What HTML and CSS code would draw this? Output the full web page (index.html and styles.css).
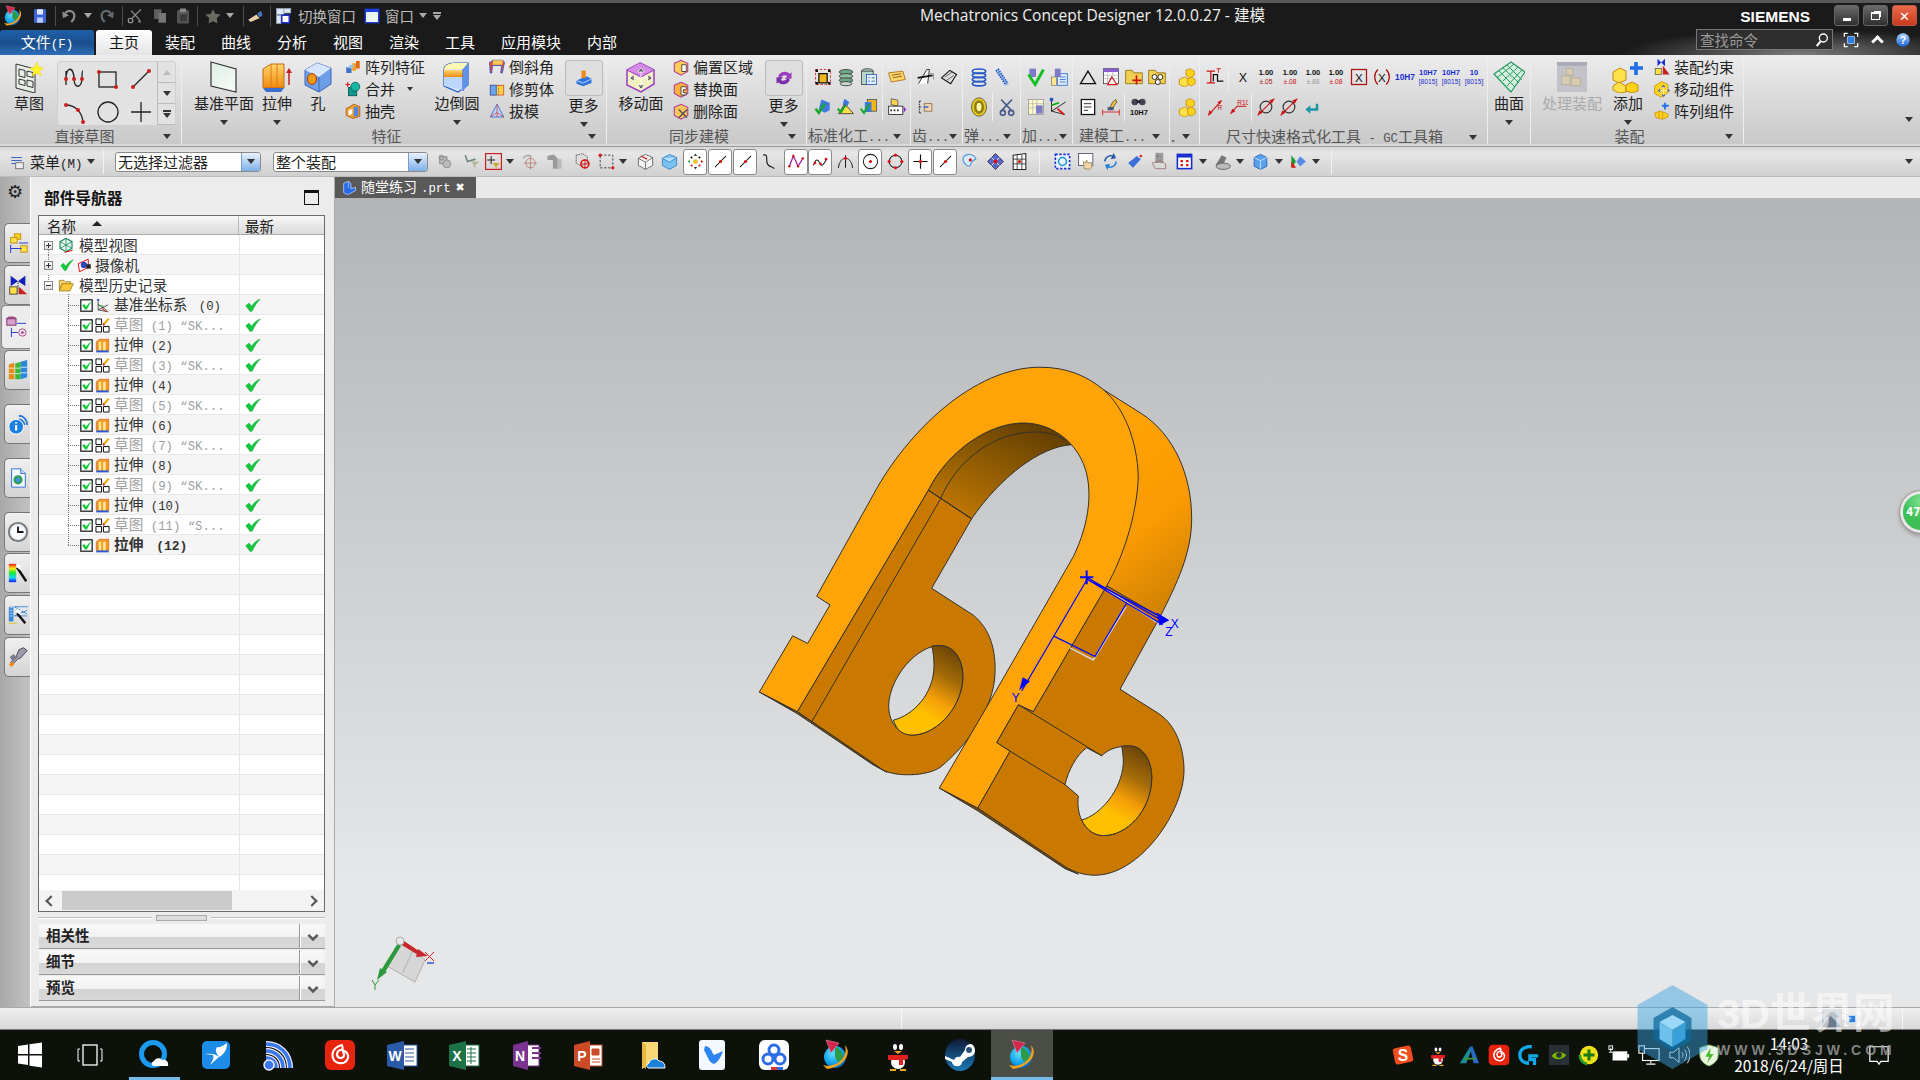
FILE: index.html
```html
<!DOCTYPE html>
<html lang="zh">
<head>
<meta charset="utf-8">
<title>Mechatronics Concept Designer 12.0.0.27 - 建模</title>
<link rel="stylesheet" href="styles.css">
</head>
<body>
<svg class="defs" xmlns="http://www.w3.org/2000/svg">
<defs>
<linearGradient id="gOr" x1="0" y1="0" x2="0" y2="1"><stop offset="0" stop-color="#ffd76a"/><stop offset="1" stop-color="#f08a10"/></linearGradient>
<linearGradient id="gBl" x1="0" y1="0" x2="0" y2="1"><stop offset="0" stop-color="#a9d4ff"/><stop offset="1" stop-color="#1b62d8"/></linearGradient>
<linearGradient id="gYe" x1="0" y1="0" x2="1" y2="1"><stop offset="0" stop-color="#fff3a8"/><stop offset="1" stop-color="#f0b818"/></linearGradient>
<linearGradient id="gPl" x1="0" y1="0" x2="1" y2="1"><stop offset="0" stop-color="#dcefe2"/><stop offset="1" stop-color="#f7fbf8"/></linearGradient>
<radialGradient id="gGlobe" cx=".4" cy=".35" r=".75"><stop offset="0" stop-color="#5fe0ff"/><stop offset=".6" stop-color="#10a0e8"/><stop offset="1" stop-color="#0a4fa8"/></radialGradient>
<linearGradient id="gSide" x1=".3" y1="0" x2=".6" y2="1"><stop offset="0" stop-color="#ffa408"/><stop offset=".6" stop-color="#fb9a02"/><stop offset="1" stop-color="#cf8204"/></linearGradient>
<linearGradient id="gIn" x1=".85" y1="0" x2=".15" y2="1"><stop offset="0" stop-color="#5f3c02"/><stop offset=".45" stop-color="#8a5802"/><stop offset="1" stop-color="#c67a04"/></linearGradient>
<linearGradient id="gHole" x1=".75" y1="0" x2=".3" y2="1"><stop offset="0" stop-color="#6b4506"/><stop offset=".3" stop-color="#a56c08"/><stop offset=".55" stop-color="#f49d08"/><stop offset=".75" stop-color="#ffc000"/><stop offset="1" stop-color="#ffc000"/></linearGradient>
<linearGradient id="gSp" x1="0" y1="0" x2="0" y2="1"><stop offset="0" stop-color="#f01818"/><stop offset=".25" stop-color="#f8e818"/><stop offset=".5" stop-color="#18e838"/><stop offset=".75" stop-color="#18d8f0"/><stop offset="1" stop-color="#1818f0"/></linearGradient>
<linearGradient id="gSt" x1="0" y1="0" x2="0" y2="1"><stop offset="0" stop-color="#0e1b36"/><stop offset="1" stop-color="#1a7ab8"/></linearGradient>

<symbol id="nx" viewBox="0 0 32 32"><circle cx="15" cy="18" r="11" fill="url(#gGlobe)"/><path d="M15 8c5 1 9 6 8 12l-5 3-3-5z" fill="#2d9a4a"/><path d="M6 1l13 3-8 10z" fill="#d4264e" stroke="#f5a0b0" stroke-width=".5"/><path d="M25 6c8 9-2 22-18 24l-4-4 5 1c12-1 20-10 17-21z" fill="#f4a21d"/></symbol>
<symbol id="save" viewBox="0 0 24 24"><rect x="4" y="3" width="16" height="18" fill="#3c63d8"/><rect x="8" y="3" width="8" height="7" fill="#e6ecff"/><rect x="8" y="14" width="8" height="7" fill="#b9c7f5"/></symbol>
<symbol id="undo" viewBox="0 0 24 24"><path d="M7 8c4-5 13-3 12 5 0 3-2 5-4 7" fill="none" stroke="#8d8d8d" stroke-width="3"/><path d="M3 6l1 9 8-4z" fill="#8d8d8d"/></symbol>
<symbol id="redo" viewBox="0 0 24 24"><path d="M17 8c-4-5-13-3-12 5 0 3 2 5 4 7" fill="none" stroke="#606c72" stroke-width="3"/><path d="M21 6l-1 9-8-4z" fill="#606c72"/></symbol>
<symbol id="cut" viewBox="0 0 24 24"><path d="M8 15L20 3M7 5l11 12" stroke="#888" stroke-width="1.600"/><circle cx="6" cy="18" r="3" fill="none" stroke="#999" stroke-width="1.600"/><circle cx="18" cy="19" r="2" fill="#777"/></symbol>
<symbol id="copy" viewBox="0 0 24 24"><rect x="4" y="3" width="10" height="13" fill="#5f5f5f"/><rect x="10" y="8" width="10" height="13" fill="#767676"/></symbol>
<symbol id="paste" viewBox="0 0 24 24"><rect x="4" y="4" width="16" height="18" rx="2" fill="#555"/><rect x="8" y="2" width="8" height="5" fill="#888"/><rect x="8" y="10" width="9" height="9" fill="#3a3a3a"/></symbol>
<symbol id="star" viewBox="0 0 24 24"><path d="M12 3l3 6 7 1-5 5 1 7-6-3-6 3 1-7-5-5 7-1z" fill="#6a6a60"/></symbol>
<symbol id="brush" viewBox="0 0 24 24"><path d="M3 17l11-7 4 5-12 5z" fill="#e8cfa8"/><path d="M15 9l5-4 2 6-4 3z" fill="#4a78c8"/></symbol>
<symbol id="sw" viewBox="0 0 24 24"><rect x="2" y="2" width="10" height="8" fill="#dfe6f2" stroke="#8fa0b8"/><rect x="12" y="2" width="9" height="6" fill="#dfe6f2" stroke="#8fa0b8"/><rect x="2" y="11" width="6" height="11" fill="#dfe6f2" stroke="#8fa0b8"/><rect x="9" y="11" width="10" height="10" fill="#fff" stroke="#1a2fd0" stroke-width="2"/></symbol>
<symbol id="wn" viewBox="0 0 24 24"><rect x="2" y="2" width="20" height="20" fill="url(#gPl)" stroke="#1b3ee0" stroke-width="2"/><rect x="3" y="3" width="18" height="3" fill="#1b3ee0"/></symbol>
<symbol id="search" viewBox="0 0 24 24"><circle cx="14" cy="9" r="6" fill="none" stroke="#fff" stroke-width="2"/><path d="M10 14l-6 7" stroke="#fff" stroke-width="3"/></symbol>
<symbol id="focus" viewBox="0 0 24 24"><path d="M2 7V2h5M17 2h5v5M22 17v5h-5M7 22H2v-5" fill="none" stroke="#fff" stroke-width="2"/><rect x="7" y="7" width="10" height="10" fill="#2b7fe0" stroke="#cfe3ff"/></symbol>
<symbol id="help" viewBox="0 0 24 24"><circle cx="12" cy="12" r="10" fill="url(#gBl)"/><text x="12" y="18" text-anchor="middle" font-size="16" font-weight="700" font-family="Liberation Sans" fill="#fff">?</text></symbol>

<symbol id="sk" viewBox="0 0 32 32"><path d="M3 3l19 5v24L3 27z" fill="#e8efe6" stroke="#333"/><path d="M6 8l6 1.500v7l-6-1.500zM14 10l6 1.500v5l-6-1.500zM6 18l6 1.500v5l-6-1.500zM14 19l6 1.500v6l-6-1.500z" fill="none" stroke="#333"/><path d="M24 1l1.500 5 5 1-4 3 2 5-5-3-4 3 1-5-4-3 5-.5z" fill="#fff22e" stroke="#eed200" stroke-width=".5"/></symbol>
<symbol id="ga1" viewBox="0 0 24 24"><path d="M3 4v14M3 12c0-14 8-12 8 0 0 10 8 10 8-2 0-4 0-6 1-6" fill="none" stroke="#222" stroke-width="1.300"/><circle cx="3" cy="12" r="2" fill="#d01e1e"/><circle cx="11" cy="12" r="2" fill="#d01e1e"/><circle cx="19" cy="12" r="2" fill="#d01e1e"/></symbol>
<symbol id="ga2" viewBox="0 0 24 24"><rect x="3" y="5" width="17" height="15" fill="none" stroke="#222" stroke-width="1.300"/><circle cx="3" cy="5" r="2" fill="#d01e1e"/><circle cx="20" cy="20" r="2" fill="#d01e1e"/></symbol>
<symbol id="ga3" viewBox="0 0 24 24"><path d="M4 20L20 4" stroke="#222" stroke-width="1.300"/><circle cx="4" cy="20" r="2" fill="#d01e1e"/><circle cx="20" cy="4" r="2" fill="#d01e1e"/></symbol>
<symbol id="ga4" viewBox="0 0 24 24"><path d="M3 5c8 0 16 6 17 17" fill="none" stroke="#222" stroke-width="1.300"/><circle cx="3" cy="5" r="2" fill="#d01e1e"/><circle cx="15" cy="10" r="2" fill="#d01e1e"/><circle cx="20" cy="22" r="2" fill="#d01e1e"/></symbol>
<symbol id="ga5" viewBox="0 0 24 24"><circle cx="12" cy="12" r="10" fill="none" stroke="#222" stroke-width="1.300"/></symbol>
<symbol id="ga6" viewBox="0 0 24 24"><path d="M12 2v20M2 12h20" stroke="#222" stroke-width="1.300"/></symbol>

<symbol id="plane" viewBox="0 0 32 32"><path d="M3 1l25 7v23L3 25z" fill="url(#gPl)" stroke="#333" stroke-width="1.200"/></symbol>
<symbol id="ext" viewBox="0 0 32 32"><path d="M2 8l8-5 13 0v24H2z" fill="url(#gOr)" stroke="#c06a10"/><path d="M10 3v24M16 3v24" stroke="#e07818"/><path d="M2 27h21l-3 4H5z" fill="#3a6fd0"/><path d="M28 24V9" stroke="#c81e1e" stroke-width="1.500"/><path d="M25 12l3-5 3 5z" fill="#c81e1e"/></symbol>
<symbol id="hole" viewBox="0 0 32 32"><path d="M3 9l12-7 14 5v16l-12 8-14-7z" fill="#6d9fe8" stroke="#3a64b8"/><path d="M3 9l14 7 12-9-14-5z" fill="#d6e6ff"/><path d="M17 16v15" stroke="#3a64b8"/><ellipse cx="10" cy="18" rx="4.500" ry="5.500" fill="#f29a10" stroke="#c03010"/></symbol>
<symbol id="arr" viewBox="0 0 24 24"><rect x="3" y="12" width="7" height="8" fill="#3d6fc8"/><rect x="11" y="7" width="5" height="10" fill="#f0a020"/><rect x="16" y="4" width="5" height="10" fill="#e86a10"/><path d="M3 13l6-4 6 1-6 4z" fill="#9cc0ef"/></symbol>
<symbol id="unite" viewBox="0 0 24 24"><rect x="6" y="10" width="11" height="11" fill="#0b9a8c" stroke="#044"/><circle cx="15" cy="9" r="6" fill="#18b5a5" stroke="#055"/><path d="M2 6h6M5 3v6" stroke="#d11" stroke-width="1.600"/></symbol>
<symbol id="shell" viewBox="0 0 24 24"><path d="M3 9l10-6 8 3v13l-9 3-9-4z" fill="#f2a02a" stroke="#a64a0a"/><path d="M13 6l6 1v11l-6 2z" fill="#4f86df"/><path d="M6 11l5-2v7l-5 2z" fill="#fff"/></symbol>
<symbol id="blend" viewBox="0 0 32 32"><path d="M3 9c0-5 5-7 11-7h13v22l-10 7-14-6z" fill="#d7e8ff" stroke="#2458c8" stroke-width="1.200"/><path d="M3 9c0-5 5-7 11-7h13l-5 6H10z" fill="#fff6b0"/><path d="M3 9h19v7H3z" fill="url(#gOr)"/><path d="M3 16h19v13l-19-4z" fill="#bcd7fb"/><path d="M22 8v22" stroke="#2458c8"/><path d="M22 8l5-6v22l-5 6z" fill="#5d92e8"/></symbol>
<symbol id="chamfer" viewBox="0 0 24 24"><path d="M2 6l5-3h13l2 3-3 14h-2l1-10H6l-1 10H3z" fill="#e84a3a" stroke="#1a4fd0"/><path d="M7 3l-1 6h13l1-6z" fill="#f8c850"/></symbol>
<symbol id="trim" viewBox="0 0 24 24"><rect x="3" y="7" width="18" height="13" fill="#ffd04a" stroke="#cf4a10"/><rect x="3" y="7" width="8" height="13" fill="#6fa3ea" stroke="#2458c8"/><path d="M14 7v13" stroke="#d31" stroke-dasharray="2 2"/></symbol>
<symbol id="draft" viewBox="0 0 24 24"><path d="M12 3L3 20h18z" fill="#bcd7fb" stroke="#2458c8"/><path d="M12 3v17M3 20l9-6 9 6" stroke="#d33" fill="none"/></symbol>
<symbol id="more1" viewBox="0 0 24 24"><path d="M3 15l12-5 6 3v5l-10 4-8-3z" fill="#2f74dc"/><path d="M3 15l8 3 10-5" stroke="#cfe3ff" fill="none"/><rect x="9" y="3" width="5" height="9" rx="1" fill="#f08a10"/></symbol>
<symbol id="more2" viewBox="0 0 24 24"><path d="M5 10c2-6 10-7 14-3l2-2v8h-8l3-3c-2-2-6-2-8 2z" fill="#9a3bc0"/><path d="M19 14c-2 6-10 7-14 3l-2 2v-8h8l-3 3c2 2 6 2 8-2z" fill="#7a2fa8"/></symbol>
<symbol id="mvf" viewBox="0 0 32 32"><path d="M15 2l14 7v14l-13 8-14-7V9z" fill="#f3f0c0" stroke="#9a3bc0" stroke-width="1.500"/><path d="M15 2l14 7-13 7-14-7z" fill="#d68be8"/><path d="M2 9l14 7 13-7" fill="none" stroke="#9a3bc0"/><path d="M16 9v17M7 17h18M16 7l-3 4h6zM16 28l-3-4h6zM5 17l4-3v6zM27 17l-4-3v6z" fill="#111" stroke="#fff" stroke-width=".8"/></symbol>
<symbol id="off" viewBox="0 0 24 24"><path d="M3 7l9-4 9 4v11l-9 5-9-5z" fill="#ffcc55" stroke="#b03a9c" stroke-width="1.400"/><path d="M13 9h6v9h-6z" fill="#fff" stroke="#222"/></symbol>
<symbol id="rep" viewBox="0 0 24 24"><path d="M3 7l9-4 9 4v11l-9 5-9-5z" fill="#ffb13a" stroke="#b03a9c" stroke-width="1.400"/><path d="M12 9h7v4h-4v4h4v3h-7z" fill="#fff" stroke="#222"/></symbol>
<symbol id="del" viewBox="0 0 24 24"><path d="M3 7l9-4 9 4v11l-9 5-9-5z" fill="#ffc45a" stroke="#b03a9c" stroke-width="1.400"/><path d="M9 10l11 11M20 10L9 21" stroke="#555" stroke-width="2"/></symbol>
<symbol id="st1" viewBox="0 0 24 24"><rect x="3" y="3" width="18" height="18" fill="none" stroke="#d91f1f" stroke-dasharray="3 2"/><rect x="7" y="8" width="10" height="11" fill="#f0b818" stroke="#111" stroke-width="1.500"/><path d="M3 3h3v3H3zM18 3h3v3h-3zM3 18h3v3H3zM18 18h3v3h-3z" fill="#111"/></symbol>
<symbol id="st2" viewBox="0 0 24 24"><ellipse cx="12" cy="6" rx="8" ry="3" fill="#6fa888" stroke="#333"/><ellipse cx="12" cy="11" rx="8" ry="3" fill="#8fc0a0" stroke="#333"/><ellipse cx="12" cy="16" rx="8" ry="3" fill="#6fa888" stroke="#333"/><ellipse cx="12" cy="20" rx="7" ry="2.500" fill="#c8d8d0" stroke="#333"/></symbol>
<symbol id="st3" viewBox="0 0 24 24"><ellipse cx="10" cy="5" rx="7" ry="3" fill="#9fc4b0" stroke="#444"/><rect x="3" y="5" width="14" height="16" fill="#b8d4c4" stroke="#444"/><rect x="9" y="9" width="12" height="12" fill="#e6f0ff" stroke="#2458c8"/><path d="M11 13h2M15 13h4M11 17h2M15 17h4" stroke="#2458c8"/></symbol>
<symbol id="st4" viewBox="0 0 24 24"><path d="M2 7l17-2 3 10-17 3z" fill="#ffd76a" stroke="#b06a10"/><path d="M6 10l11-2M7 13l11-2" stroke="#7a4a10"/></symbol>
<symbol id="st5" viewBox="0 0 24 24"><path d="M10 3l10 4v9l-6 3-7-4z" fill="#3d7be0"/><path d="M3 14l4 5 7-11" fill="none" stroke="#15a825" stroke-width="3"/></symbol>
<symbol id="st6" viewBox="0 0 24 24"><path d="M10 2l6 4-3 6-5-3z" fill="#3d7be0"/><path d="M3 20l7-11 4 3 7 8z" fill="#ffe04a" stroke="#333"/><path d="M2 14l4 4 5-8" fill="none" stroke="#15a825" stroke-width="2.500"/></symbol>
<symbol id="st7" viewBox="0 0 24 24"><rect x="10" y="3" width="11" height="14" fill="#f0b818" stroke="#555"/><rect x="7" y="6" width="8" height="12" fill="#3d7be0"/><path d="M2 14l4 5 6-10" fill="none" stroke="#15a825" stroke-width="2.500"/></symbol>
<symbol id="st8" viewBox="0 0 24 24"><path d="M5 2l8 2v7l-8-2z" fill="#ffd04a" stroke="#555"/><rect x="2" y="11" width="17" height="10" fill="#fff" stroke="#222"/><path d="M4 16h2M8 16h2M12 16h2" stroke="#222" stroke-width="2"/><path d="M20 11l3 4-3 4z" fill="#8a2fc0"/></symbol>
<symbol id="gr1" viewBox="0 0 24 24"><path d="M3 20L13 3h3l-2 17" fill="#fff" stroke="#111"/><path d="M2 13l18-3" stroke="#111" stroke-width="2"/><path d="M14 8h7v7" stroke="#888" fill="none"/></symbol>
<symbol id="gr2" viewBox="0 0 24 24"><path d="M3 13l10-9 8 5-7 11z" fill="#dcdcdc" stroke="#111" stroke-width="1.300"/><path d="M7 12l9-6M9 16l9-6" stroke="#555"/></symbol>
<symbol id="gr3" viewBox="0 0 24 24"><path d="M4 5v14M4 5h3M4 12h3M4 19h3" stroke="#111" stroke-dasharray="2 1"/><rect x="10" y="8" width="9" height="9" fill="#f6d6b0" stroke="#8a6a40"/><path d="M9 12h6" stroke="#4a6ad0" stroke-width="2"/></symbol>
<symbol id="sp1" viewBox="0 0 24 24"><ellipse cx="12" cy="5" rx="8" ry="2.600" fill="none" stroke="#2458c8" stroke-width="2"/><ellipse cx="12" cy="10" rx="8" ry="2.600" fill="none" stroke="#2458c8" stroke-width="2"/><ellipse cx="12" cy="15" rx="8" ry="2.600" fill="none" stroke="#2458c8" stroke-width="2"/><ellipse cx="12" cy="20" rx="8" ry="2.600" fill="none" stroke="#2458c8" stroke-width="2"/></symbol>
<symbol id="sp2" viewBox="0 0 24 24"><path d="M6 3l12 18" stroke="#2458c8" stroke-width="5" stroke-dasharray="2 1"/><path d="M6 3l12 18" stroke="#7aa8ea" stroke-width="1.500"/></symbol>
<symbol id="sp3" viewBox="0 0 24 24"><ellipse cx="12" cy="12" rx="9" ry="11" fill="#e8c818" stroke="#554"/><ellipse cx="12" cy="12" rx="6" ry="8" fill="#8a7a10"/><ellipse cx="12" cy="12" rx="3" ry="5" fill="#fff4a8"/></symbol>
<symbol id="sp4" viewBox="0 0 24 24"><path d="M5 3l13 14M18 3L5 17" stroke="#4a5a8a" stroke-width="2"/><circle cx="7" cy="19" r="3" fill="none" stroke="#4a5a8a" stroke-width="2"/><circle cx="17" cy="19" r="3" fill="none" stroke="#4a5a8a" stroke-width="2"/></symbol>
<symbol id="ad1" viewBox="0 0 24 24"><rect x="4" y="2" width="8" height="10" fill="#7c7cc8"/><path d="M3 9l8 12L21 3" fill="none" stroke="#15c025" stroke-width="3.500"/></symbol>
<symbol id="ad2" viewBox="0 0 24 24"><rect x="10" y="8" width="12" height="14" fill="#dfeaff" stroke="#2f6fd0"/><path d="M13 12h7M13 15h7M13 18h7" stroke="#2f6fd0"/><rect x="7" y="2" width="7" height="10" fill="#7c7cc8"/><rect x="3" y="12" width="6" height="10" fill="#ffe98a" stroke="#887"/></symbol>
<symbol id="ad3" viewBox="0 0 24 24"><rect x="3" y="3" width="18" height="18" fill="#fff8c8" stroke="#999"/><path d="M3 8h18M3 13h18M8 3v18M13 3v18" stroke="#bbb"/><rect x="12" y="10" width="8" height="10" fill="#7c7cc8"/></symbol>
<symbol id="ad4" viewBox="0 0 24 24"><path d="M3 3v14l16 4M3 17L20 6" fill="none" stroke="#111"/><path d="M3 10l9-3" stroke="#0a0" stroke-width="2"/><path d="M10 14l8 7" stroke="#d11" stroke-width="2"/><rect x="1" y="1" width="4" height="4" fill="#2a50c8"/></symbol>
<symbol id="mt1" viewBox="0 0 24 24"><path d="M12 5L21 20H3z" fill="none" stroke="#111" stroke-width="1.600"/></symbol>
<symbol id="mt2" viewBox="0 0 24 24"><rect x="3" y="2" width="18" height="18" fill="#fff" stroke="#444"/><rect x="3" y="2" width="18" height="4" fill="#8a5fd0"/><path d="M3 10h18M3 14h18M8 6v14M14 6v14" stroke="#bbb"/><path d="M13 12l6 9H8z" fill="#fff" stroke="#d11" stroke-width="1.500"/></symbol>
<symbol id="mt3" viewBox="0 0 24 24"><path d="M2 4h8l2 3h10v13H2z" fill="#f2cf50" stroke="#8a7010"/><path d="M15 10v11M10 16h11" stroke="#c11" stroke-width="2"/></symbol>
<symbol id="mt4" viewBox="0 0 24 24"><path d="M2 4h8l2 3h10v13H2z" fill="#f2cf50" stroke="#8a7010"/><circle cx="9" cy="12" r="3" fill="#fff" stroke="#111"/><circle cx="16" cy="12" r="3" fill="#fff" stroke="#111"/><circle cx="13" cy="18" r="3" fill="#fff" stroke="#111"/></symbol>
<symbol id="mt5" viewBox="0 0 24 24"><rect x="4" y="3" width="16" height="18" fill="#fff" stroke="#111" stroke-width="1.500"/><path d="M7 8h9M7 12h9M7 16h5" stroke="#111"/></symbol>
<symbol id="mt6" viewBox="0 0 24 24"><path d="M2 15v7M22 15v7M2 18h20" stroke="#d11"/><path d="M10 14l4-8 4-3 1 3-3 4-2 5z" fill="#f0c040" stroke="#553"/><rect x="8" y="12" width="7" height="4" fill="#4a5a7a"/></symbol>
<symbol id="mt7" viewBox="0 0 24 24"><circle cx="7" cy="6" r="4" fill="#445"/><circle cx="16" cy="6" r="4" fill="#445"/><rect x="9" y="4" width="5" height="3" fill="#223"/><text x="12" y="21" text-anchor="middle" font-size="9" font-weight="700" font-family="Liberation Sans" fill="#111">10H7</text></symbol>
<symbol id="cube" viewBox="0 0 24 24"><path d="M4 15l6-3 6 3v6l-6 3-6-3z" fill="#ffe24a" stroke="#c68a10"/><path d="M12 4l5-2 5 3v5l-5 3-5-3z" fill="#ffd21a" stroke="#c68a10"/><path d="M14 14l4-2 5 3v5l-5 3-4-3z" fill="#ffd21a" stroke="#c68a10"/></symbol>
<symbol id="d1" viewBox="0 0 24 24"><path d="M2 5h10M2 19h10M7 5v14" stroke="#c11" stroke-width="1.500"/><path d="M10 17V9h5v8h7" fill="none" stroke="#111" stroke-width="1.500"/><path d="M14 2h5M16 2v5" stroke="#c11"/></symbol>
<symbol id="tX" viewBox="0 0 24 24"><text x="12" y="18" text-anchor="middle" font-size="15" font-family="Liberation Sans" fill="#111">X</text></symbol>
<symbol id="num" viewBox="0 0 24 24"><text x="12" y="10" text-anchor="middle" font-size="9" font-weight="700" font-family="Liberation Sans" fill="#111">1.00</text><text x="12" y="20" text-anchor="middle" font-size="8" font-family="Liberation Sans" fill="#a11">±.05</text></symbol>
<symbol id="numr" viewBox="0 0 24 24"><text x="12" y="10" text-anchor="middle" font-size="9" font-weight="700" font-family="Liberation Sans" fill="#111">1.00</text><text x="12" y="20" text-anchor="middle" font-size="8" font-family="Liberation Sans" fill="#c11">±.08</text></symbol>
<symbol id="numg" viewBox="0 0 24 24"><text x="12" y="10" text-anchor="middle" font-size="9" font-weight="700" font-family="Liberation Sans" fill="#111">1.00</text><text x="12" y="20" text-anchor="middle" font-size="8" font-family="Liberation Sans" fill="#999">±.88</text></symbol>
<symbol id="bxX" viewBox="0 0 24 24"><rect x="3" y="3" width="18" height="18" fill="none" stroke="#a11" stroke-width="1.500"/><text x="12" y="18" text-anchor="middle" font-size="14" font-family="Liberation Sans" fill="#111">X</text></symbol>
<symbol id="prX" viewBox="0 0 24 24"><path d="M7 3c-5 5-5 13 0 18M17 3c5 5 5 13 0 18" fill="none" stroke="#a11" stroke-width="1.500"/><text x="12" y="18" text-anchor="middle" font-size="14" font-family="Liberation Sans" fill="#111">X</text></symbol>
<symbol id="h7" viewBox="0 0 24 24"><text x="12" y="16" text-anchor="middle" font-size="10" font-weight="700" font-family="Liberation Sans" fill="#1a2fd0">10H7</text></symbol>
<symbol id="h7b" viewBox="0 0 24 24"><text x="12" y="10" text-anchor="middle" font-size="9" font-weight="700" font-family="Liberation Sans" fill="#1a2fd0">10H7</text><text x="12" y="20" text-anchor="middle" font-size="8" font-family="Liberation Sans" fill="#1a2fd0">[8015]</text></symbol>
<symbol id="h10" viewBox="0 0 24 24"><text x="12" y="10" text-anchor="middle" font-size="9" font-weight="700" font-family="Liberation Sans" fill="#1a2fd0">10</text><text x="12" y="20" text-anchor="middle" font-size="8" font-family="Liberation Sans" fill="#1a2fd0">[8015]</text></symbol>
<symbol id="r1" viewBox="0 0 24 24"><path d="M4 22L20 4" stroke="#c11" stroke-width="1.300"/><path d="M4 22l1-6 4 3zM20 4l-5 2 3 3z" fill="#c11"/><text x="15" y="15" font-size="8" font-family="Liberation Sans" fill="#c11">R</text></symbol>
<symbol id="r2" viewBox="0 0 24 24"><path d="M3 20l8-9h11" fill="none" stroke="#c11" stroke-width="1.300"/><path d="M3 20l2-6 4 3z" fill="#c11"/><text x="11" y="9" font-size="8" font-family="Liberation Sans" fill="#c11">R10</text></symbol>
<symbol id="dia" viewBox="0 0 24 24"><circle cx="12" cy="12" r="7" fill="none" stroke="#333" stroke-width="1.400"/><path d="M2 22L22 2" stroke="#c11" stroke-width="1.300"/><path d="M2 22l2-6 4 3zM22 2l-6 2 3 4z" fill="#c11"/></symbol>
<symbol id="ret" viewBox="0 0 24 24"><path d="M18 8v7H9" fill="none" stroke="#1b96a8" stroke-width="3"/><path d="M10 10l-6 5 6 5z" fill="#1b96a8"/></symbol>
<symbol id="mesh" viewBox="0 0 32 32"><path d="M1 13L18 1l14 10-14 20z" fill="#d5f0dc" stroke="#2a9a68" stroke-width="1.200"/><path d="M5 16L21 3M10 20L25 6M14 25L29 9M6 10l16 16M10 7l16 15M14 4l15 15" stroke="#2a9a68"/></symbol>
<symbol id="proc" viewBox="0 0 32 32"><rect x="0" y="0" width="32" height="32" fill="#c2c2c8"/><rect x="0" y="0" width="32" height="4" fill="#a9a9b8"/><path d="M10 7h7v7h-7zM5 15h9v9H5zM15 17h10v8H15z" fill="#d8cdb2" stroke="#b8ad98"/></symbol>
<symbol id="addc" viewBox="0 0 32 32"><path d="M1 11l7-4 6 3v9l-7 3-6-3z" fill="#ffe24a" stroke="#c68a10"/><path d="M1 25l6-4 7 4v6l-7 1-6-3z" fill="#ffe24a" stroke="#c68a10"/><path d="M14 24l6-3 6 3v6l-6 2-6-2z" fill="#ffd21a" stroke="#c68a10"/><path d="M24 1v13M18 7h13" stroke="#1f6fe8" stroke-width="3.600"/></symbol>
<symbol id="ac" viewBox="0 0 24 24"><path d="M6 1l5 5 5-5v10l-5-5-5 5z" fill="#1a2fd0"/><rect x="3" y="14" width="8" height="8" fill="#ffe24a" stroke="#554"/><path d="M13 22V10l9 12z" fill="#c81e1e"/></symbol>
<symbol id="mc" viewBox="0 0 24 24"><path d="M2 8l9-6 9 4v11l-9 6-9-5z" fill="#ffd21a" stroke="#c68a10"/><path d="M14 8v13M8 14h13M14 6l-3 4h6zM14 23l-3-4h6zM6 14l4-3v6zM23 14l-4-3v6z" fill="#111" stroke="#fff" stroke-width=".7"/></symbol>
<symbol id="pc" viewBox="0 0 24 24"><path d="M16 1v9M12 5h9" stroke="#1f6fe8" stroke-width="2.400"/><path d="M2 15l7-3 6 2 5 2v4l-7 3-9-2z" fill="#ffd21a" stroke="#c68a10"/><path d="M8 13v8M13 14v8" stroke="#c68a10"/></symbol>

<symbol id="tb1" viewBox="0 0 24 24"><rect x="6" y="6" width="9" height="9" fill="#bbb" stroke="#777"/><circle cx="8" cy="7" r="3" fill="none" stroke="#888"/><circle cx="15" cy="15" r="5" fill="#bbb" stroke="#888"/></symbol>
<symbol id="tb2" viewBox="0 0 24 24"><path d="M4 4l3 8 10-3" fill="none" stroke="#6a8a7a" stroke-width="2"/><path d="M12 12h10l-5 5v5z" fill="#b8b89a"/></symbol>
<symbol id="tb3" viewBox="0 0 24 24"><rect x="2" y="2" width="20" height="20" fill="none" stroke="#c81e1e" stroke-width="1.500"/><path d="M9 5v10M4 10h10" stroke="#222" stroke-width="1.300"/><path d="M11 14h9l-4 4v3z" fill="#c8a820"/></symbol>
<symbol id="tb4" viewBox="0 0 24 24"><path d="M3 8c2-4 8-5 10-2" fill="none" stroke="#aaa" stroke-width="2"/><circle cx="12" cy="14" r="6" fill="none" stroke="#b0786a"/><path d="M12 6v16M4 14h16" stroke="#b0786a"/></symbol>
<symbol id="tb5" viewBox="0 0 24 24"><path d="M3 5l8-2 5 5v13h-6V10H3z" fill="#999"/><path d="M16 9h5v12h-5z" fill="#bbb"/></symbol>
<symbol id="tb6" viewBox="0 0 24 24"><path d="M4 4l8-2 6 4v8l-8 4-6-4z" fill="#ddd" stroke="#444" stroke-dasharray="2 1"/><circle cx="15" cy="15" r="5" fill="none" stroke="#d11" stroke-width="2"/><path d="M15 9v12M9 15h12" stroke="#d11"/></symbol>
<symbol id="tb7" viewBox="0 0 24 24"><rect x="4" y="4" width="16" height="16" fill="none" stroke="#222" stroke-dasharray="3 2"/><circle cx="4" cy="4" r="2" fill="#d11"/><circle cx="20" cy="20" r="2" fill="#d11"/></symbol>
<symbol id="tb8" viewBox="0 0 24 24"><path d="M3 8l9-5 9 4v10l-9 5-9-5z" fill="#f4f4f4" stroke="#555"/><path d="M3 8l9 5 9-6M12 13v9" stroke="#555" fill="none"/><path d="M6 5l8 4" stroke="#c22" stroke-width="1.500"/></symbol>
<symbol id="tb9" viewBox="0 0 24 24"><path d="M3 8l9-5 9 4v10l-9 5-9-5z" fill="#7cc0f0" stroke="#2a78c8"/><path d="M3 8l9 5 9-6" fill="#b8e0ff" stroke="#2a78c8"/></symbol>
<symbol id="sn" viewBox="0 0 24 24"><path d="M12 3l9 9-9 9-9-9z" fill="#fff"/><circle cx="12" cy="12" r="3" fill="#f0c020"/><path d="M12 2l-2 3h4zM12 22l-2-3h4z" fill="#333"/><path d="M2 12l3-2v4z" fill="#1a9a2a"/><path d="M22 12l-3-2v4z" fill="#d11"/><circle cx="7" cy="7" r="1.300"/><circle cx="17" cy="7" r="1.300"/><circle cx="7" cy="17" r="1.300" fill="#d11"/><circle cx="17" cy="17" r="1.300" fill="#d11"/></symbol>
<symbol id="ln" viewBox="0 0 24 24"><path d="M5 19L19 5" stroke="#222" stroke-width="1.300"/><circle cx="12" cy="12" r="2" fill="#d11"/></symbol>
<symbol id="kk" viewBox="0 0 24 24"><path d="M4 4c8-2 2 8 6 12 2 3 7 3 8 5" fill="none" stroke="#222" stroke-width="1.500"/></symbol>
<symbol id="pk" viewBox="0 0 24 24"><path d="M3 18l5-13 6 13 6-10" fill="none" stroke="#a020a0" stroke-width="1.600"/><circle cx="8" cy="5" r="1.500" fill="#d11"/><circle cx="14" cy="18" r="1.500" fill="#d11"/><circle cx="3" cy="18" r="1.500" fill="#d11"/><circle cx="20" cy="8" r="1.500" fill="#d11"/></symbol>
<symbol id="wv" viewBox="0 0 24 24"><path d="M3 17c3-9 6-8 8-3s5 3 9-6" fill="none" stroke="#222" stroke-width="1.300"/><circle cx="5" cy="14" r="1.600" fill="#d11"/><circle cx="12" cy="15" r="1.600" fill="#d11"/><circle cx="19" cy="9" r="1.600" fill="#d11"/></symbol>
<symbol id="ax" viewBox="0 0 24 24"><path d="M12 20V4M3 20C4 12 8 8 12 8s8 4 9 12" fill="none" stroke="#222" stroke-width="1.300"/><circle cx="12" cy="8" r="2" fill="#d11"/></symbol>
<symbol id="cc" viewBox="0 0 24 24"><circle cx="12" cy="12" r="9" fill="none" stroke="#222" stroke-width="1.300"/><circle cx="12" cy="12" r="2" fill="#d11"/></symbol>
<symbol id="cp" viewBox="0 0 24 24"><circle cx="12" cy="12" r="8" fill="none" stroke="#222" stroke-width="1.300"/><circle cx="12" cy="4" r="2" fill="#d11"/><circle cx="4" cy="12" r="2" fill="#d11"/><circle cx="20" cy="12" r="2" fill="#d11"/><circle cx="12" cy="20" r="2" fill="#d11"/></symbol>
<symbol id="cr" viewBox="0 0 24 24"><path d="M12 3v18M3 12h18" stroke="#111" stroke-width="1.500"/><circle cx="12" cy="12" r="2" fill="#d11"/></symbol>
<symbol id="ft" viewBox="0 0 24 24"><path d="M4 7c4-6 14-5 16 2-3 1-6 3-7 8-4 3-10-4-9-10z" fill="#d6ecff" stroke="#5a9ad8" stroke-width="1.500"/><circle cx="13" cy="10" r="2" fill="#d11"/></symbol>
<symbol id="fg" viewBox="0 0 24 24"><path d="M12 2l10 10-10 10L2 12z" fill="#5a6ac8" stroke="#223"/><path d="M7 7l10 10M17 7L7 17" stroke="#fff"/><circle cx="12" cy="12" r="2.500" fill="#d11"/></symbol>
<symbol id="fm" viewBox="0 0 24 24"><path d="M4 4l16-2v20H4z" fill="#fff" stroke="#222" stroke-width="1.300"/><path d="M9 3v19M15 3v19M4 9h16M4 15h16" stroke="#222"/><circle cx="12" cy="12" r="2" fill="#d11"/></symbol>
<symbol id="v1" viewBox="0 0 24 24"><rect x="3" y="3" width="18" height="18" fill="#eef4ff" stroke="#1a2fd0" stroke-width="2" stroke-dasharray="3 2"/><circle cx="12" cy="12" r="5" fill="none" stroke="#1a9ad0" stroke-width="2"/></symbol>
<symbol id="v2" viewBox="0 0 24 24"><rect x="2" y="2" width="18" height="15" fill="#fff" stroke="#446"/><path d="M9 21l-1-9 3 2 1-4 2 4 4-1 1 6-3 3z" fill="#f4d4a8" stroke="#885"/></symbol>
<symbol id="v3" viewBox="0 0 24 24"><path d="M4 12C4 6 10 3 15 4l1-3 3 7-7 1 2-3C10 5 6 8 6 12z" fill="#2458a8"/><path d="M20 12c0 6-6 9-11 8l-1 3-3-7 7-1-2 3c4 1 8-2 8-6z" fill="#1b80d8"/></symbol>
<symbol id="v4" viewBox="0 0 24 24"><path d="M4 14l11-9 5 4-10 11z" fill="#3d6fd8"/><circle cx="20" cy="5" r="1.500" fill="#d11"/></symbol>
<symbol id="v5" viewBox="0 0 24 24"><rect x="8" y="1" width="10" height="13" fill="#9a9a9a"/><path d="M4 14l10-3 7 4v6H8z" fill="none" stroke="#a06a6a"/><circle cx="11" cy="5" r="1" fill="#555"/></symbol>
<symbol id="v6" viewBox="0 0 24 24"><rect x="3" y="3" width="18" height="18" fill="#fff" stroke="#1a2fd0" stroke-width="2"/><rect x="3" y="3" width="18" height="4" fill="#1a2fd0"/><path d="M7 10h3v3H7zM14 10h3v3h-3zM7 15h3v3H7zM14 15h3v3h-3z" fill="#d11"/></symbol>
<symbol id="v7" viewBox="0 0 24 24"><path d="M3 17l8-13 6 3-5 11z" fill="#777"/><ellipse cx="13" cy="18" rx="9" ry="4" fill="#bbb" stroke="#555"/></symbol>
<symbol id="v8" viewBox="0 0 24 24"><path d="M4 7l8-4 8 4v11l-8 4-8-4z" fill="#5aa0ec" stroke="#1a58b0"/><path d="M4 7l8 4 8-4M12 11v11" fill="none" stroke="#d0e6ff"/></symbol>
<symbol id="v9" viewBox="0 0 24 24"><path d="M3 4l6 8-6 8z" fill="#1a9a2a"/><path d="M3 12l6 8H3z" fill="#d11"/><path d="M14 5l8 7-8 7-5-7z" fill="#5a8ae0" stroke="#d6e6ff"/></symbol>
<symbol id="menu" viewBox="0 0 24 24"><path d="M3 6h14M3 10h14M3 14h10" stroke="#3a68c8" stroke-width="1.500"/><rect x="9" y="13" width="10" height="8" fill="#eee" stroke="#555"/></symbol>

<symbol id="t1" viewBox="0 0 24 24"><rect x="8" y="2" width="7" height="6" fill="#ffd21a" stroke="#c68a10"/><rect x="4" y="6" width="7" height="6" fill="#ffe24a" stroke="#c68a10"/><rect x="15" y="15" width="7" height="7" fill="#ffe24a" stroke="#c68a10"/><path d="M4 14v9M4 18h12M13 12h10" stroke="#1a2fd0"/></symbol>
<symbol id="t2" viewBox="0 0 24 24"><path d="M4 2l8 6 8-6v11l-8-5-8 5z" fill="#0f1fb8"/><path d="M12 9v13" stroke="#333" stroke-dasharray="2 1"/><rect x="3" y="14" width="8" height="8" fill="#ffe24a" stroke="#444"/><path d="M13 22v-8l9 8z" fill="#c81e1e"/></symbol>
<symbol id="t3" viewBox="0 0 24 24"><ellipse cx="7" cy="3" rx="5" ry="2" fill="#c86aa8" stroke="#7a2a68"/><rect x="2" y="3" width="10" height="7" fill="#d8a0c8" stroke="#7a2a68"/><path d="M7 13v10M7 18h7M13 8h10" stroke="#1a2fd0"/><circle cx="19" cy="18" r="4" fill="none" stroke="#b03a8c"/><circle cx="19" cy="18" r="1.500" fill="#b03a8c"/></symbol>
<symbol id="t4" viewBox="0 0 24 24"><path d="M2 6l6-2v18H2z" fill="#e88a18"/><path d="M9 5l6-2v19H9z" fill="#3ab83a"/><path d="M15 3l7-2v19l-7 2z" fill="#2a8ad8"/><path d="M2 10h6M2 16h6M9 10h6M9 16h6M15 9h7M15 15h7" stroke="#fff" stroke-width=".8"/></symbol>
<symbol id="t5" viewBox="0 0 24 24"><path d="M13 3c5 0 9 4 9 10M13 7c3 0 6 3 6 6" fill="none" stroke="#2a7ad8" stroke-width="2"/><circle cx="10" cy="15" r="8" fill="#1b7fe0" stroke="#fff"/><path d="M10 10v1.500M10 13v6" stroke="#fff" stroke-width="2.400"/></symbol>
<symbol id="t6" viewBox="0 0 24 24"><path d="M5 2h10l5 5v15H5z" fill="#f2f6ff" stroke="#2a6ad0"/><path d="M15 2v5h5" fill="#cfe0ff" stroke="#2a6ad0"/><circle cx="12" cy="14" r="5" fill="#2ca058"/><circle cx="12" cy="14" r="2.500" fill="#4a90e0"/></symbol>
<symbol id="t7" viewBox="0 0 24 24"><circle cx="12" cy="12" r="10" fill="#dfe8f4" stroke="#777" stroke-width="2"/><circle cx="12" cy="12" r="7.500" fill="#fff"/><path d="M12 6v6h6" fill="none" stroke="#111" stroke-width="2"/></symbol>
<symbol id="t8" viewBox="0 0 24 24"><rect x="2" y="2" width="8" height="20" fill="url(#gSp)"/><path d="M11 6l10 15" stroke="#111" stroke-width="2.600"/><path d="M10 5l2-4 1 3 4-1-3 3 3 3-4-1z" fill="#fff"/></symbol>
<symbol id="t9" viewBox="0 0 24 24"><path d="M2 3h5v16H2z" fill="#3a88d8"/><path d="M3 4h3M3 7h3M3 10h3M3 13h3" stroke="#bcd8f8"/><path d="M8 3h15M8 3l14 8M8 13h14M8 13l14-6" fill="none" stroke="#3a88d8"/><path d="M11 10l9 11" stroke="#111" stroke-width="2.600"/><path d="M10 8l2-4 1 3 4-1-3 3 3 3-4-1z" fill="#fff"/><path d="M2 21h9" stroke="#e8c018"/></symbol>
<symbol id="t10" viewBox="0 0 24 24"><path d="M13 4l5-2 4 3-7 8-3 1-6 6-2-2 6-6 1-3z" fill="#9a9aa8" stroke="#445"/><path d="M3 12l4-3 4 3-5 5z" fill="#7a7a8a"/><path d="M2 20l4-3 2 3-3 3z" fill="#f08a10"/></symbol>

<symbol id="exp" viewBox="0 0 24 24"><path d="M4 10l8 8 8-8" fill="none" stroke="#5a5a5a" stroke-width="4.500"/></symbol>
<symbol id="ck" viewBox="0 0 24 24"><path d="M1 13l5-4 4 5C13 9 17 5 23 3c-5 5-9 11-12 18l-3 1z" fill="#14c83c" stroke="#0a9c2a" stroke-width=".6"/></symbol>
<symbol id="cb" viewBox="0 0 24 24"><rect x="1.500" y="1.500" width="21" height="21" fill="#fff" stroke="#111" stroke-width="2.200"/><path d="M4 12l4-3 3 5c3-4 6-7 11-10-4 5-7 10-9 15l-3 1z" fill="#14c83c"/></symbol>
<symbol id="skt" viewBox="0 0 24 24"><path d="M1.500 1.500h9v9h-9zM1.500 13.500h9v9h-9zM13.500 13.500h9v9h-9z" fill="#fff" stroke="#111" stroke-width="1.600"/><path d="M14 10L22 1" stroke="#e8a818" stroke-width="3.400"/><path d="M12 12l1-4 3 3z" fill="#d11"/></symbol>
<symbol id="exs" viewBox="0 0 24 24"><path d="M2 6l5-4h15v18H2z" fill="#f29a20" stroke="#c85a10"/><path d="M6 6h4v14H6zM13 6h4v14h-4z" fill="#ffe8a0"/><path d="M2 20h20v3H2z" fill="#2a5ad0"/></symbol>
<symbol id="csys" viewBox="0 0 24 24"><path d="M5 2v17l16-8M5 19l16 3M5 10l14 10" fill="none" stroke="#333" stroke-width="1.300"/><path d="M5 12l9 1" stroke="#2ca02c" stroke-width="1.500"/><path d="M11 17l7 5" stroke="#d11" stroke-width="1.500"/><path d="M3 3h4" stroke="#1a2fd0" stroke-width="2"/></symbol>
<symbol id="mv" viewBox="0 0 24 24"><path d="M12 2l9 5v10l-9 5-9-5V7z" fill="#e6f4ec" stroke="#1a8a60" stroke-width="1.800"/><path d="M3 7l9 5 9-5M12 12v10M3 17l9-5 9 5M12 2v10" fill="none" stroke="#1a8a60" stroke-width="1.200"/><path d="M10 23l12-3" stroke="#d11" stroke-width="1.500"/></symbol>
<symbol id="cam" viewBox="0 0 24 24"><path d="M2 9l16-7v13L4 22z" fill="#fff" stroke="#d11" stroke-width="1.600"/><circle cx="11" cy="11" r="5" fill="#2a48b8"/><rect x="15" y="10" width="7" height="7" fill="#222"/></symbol>
<symbol id="fold" viewBox="0 0 24 24"><path d="M2 5h7l2 2h8v4H6L2 20z" fill="#f8d46a" stroke="#8a6a18"/><path d="M2 21l4-11h17l-5 11z" fill="#fcc53a" stroke="#8a6a18"/></symbol>
<symbol id="part" viewBox="0 0 24 24"><path d="M4 5l7-3 4 3v8l7-2v5l-12 6-6-3z" fill="#2a6ae8" stroke="#cfe3ff"/><path d="M11 2v10" stroke="#bcd8ff"/></symbol>

<symbol id="win" viewBox="0 0 32 32"><path d="M4 7l10-1.500V15H4zM15.500 5.300L28 3.500V15H15.500zM4 16.500h10V26L4 24.600zM15.500 16.500H28v12l-12.500-1.800z" fill="#fff"/></symbol>
<symbol id="tv" viewBox="0 0 32 32"><rect x="9" y="6" width="14" height="20" fill="none" stroke="#fff" stroke-width="1.300"/><path d="M6 10H4v12h2M26 10h2v12h-2" fill="none" stroke="#fff"/></symbol>
<symbol id="qb" viewBox="0 0 32 32"><circle cx="15" cy="15" r="11.500" fill="none" stroke="#1b9af0" stroke-width="5"/><path d="M9 28c-3 0-3-4 0-5 1-3 6-4 8-1 4-1 7 2 6 6z" fill="#fff" transform="translate(7 -1)"/></symbol>
<symbol id="sw2" viewBox="0 0 32 32"><rect x="2" y="2" width="28" height="28" rx="5" fill="#1d8be8"/><path d="M5 15c6-1 11 0 14 3l-9 8c3-5 4-8 3-10zM27 4c0 8-4 12-8 14-3-4-4-7-2-10 2 1 4 0 10-4z" fill="#fff"/></symbol>
<symbol id="rs" viewBox="0 0 32 32"><path d="M4 5c14 0 24 10 24 24M4 12c10 0 17 7 17 17M4 19c6 0 10 4 10 10" fill="none" stroke="#eef" stroke-width="6"/><path d="M4 5c14 0 24 10 24 24M4 12c10 0 17 7 17 17M4 19c6 0 10 4 10 10" fill="none" stroke="#3a78e8" stroke-width="3.500"/><circle cx="7" cy="26" r="5" fill="#3a78e8" stroke="#eef" stroke-width="1.500"/></symbol>
<symbol id="ne" viewBox="0 0 32 32"><rect x="1" y="1" width="30" height="30" rx="6" fill="#e8230e"/><path d="M19 6c-8 1-12 7-10 13 2 6 11 7 14 2s-1-10-6-10c-4 0-5 5-3 7s6 1 6-2c0-3-3-7-1-9" fill="none" stroke="#fff" stroke-width="2.200"/></symbol>
<symbol id="wd" viewBox="0 0 32 32"><rect x="16" y="6" width="15" height="21" fill="#fff" stroke="#2a5aa8"/><path d="M19 10h9M19 14h9M19 18h9M19 22h9" stroke="#2a5aa8"/><path d="M1 6l17-4v29L1 27z" fill="#2a5aa8"/><text x="9" y="22" text-anchor="middle" font-size="14" font-weight="700" font-family="Liberation Sans" fill="#fff">W</text></symbol>
<symbol id="xl" viewBox="0 0 32 32"><rect x="16" y="6" width="15" height="21" fill="#fff" stroke="#1d7245"/><path d="M19 10h9M19 14h9M19 18h9M19 22h9M23 8v17" stroke="#1d7245"/><path d="M1 6l17-4v29L1 27z" fill="#1d7245"/><text x="9" y="22" text-anchor="middle" font-size="14" font-weight="700" font-family="Liberation Sans" fill="#fff">X</text></symbol>
<symbol id="on" viewBox="0 0 32 32"><rect x="16" y="6" width="13" height="21" fill="#fff" stroke="#7a3490"/><path d="M22 9h9M22 14h9M22 19h9" stroke="#7a3490" stroke-width="2"/><path d="M3 6l15-4v29L3 27z" fill="#7a3490"/><text x="10" y="22" text-anchor="middle" font-size="14" font-weight="700" font-family="Liberation Sans" fill="#fff">N</text></symbol>
<symbol id="pp" viewBox="0 0 32 32"><rect x="16" y="6" width="14" height="21" fill="#fff" stroke="#cc4a26"/><path d="M20 10h7v6h-7zM20 20h8M20 23h8" stroke="#cc4a26" fill="#cc4a26"/><path d="M2 6l16-4v29L2 27z" fill="#cc4a26"/><text x="10" y="22" text-anchor="middle" font-size="14" font-weight="700" font-family="Liberation Sans" fill="#fff">P</text></symbol>
<symbol id="fo" viewBox="0 0 32 32"><path d="M8 3h16v24H12l-4 3z" fill="#f8d673"/><path d="M8 3l4 3v24l-4-3z" fill="#e8b840"/><path d="M15 29c-3 0-3-4 0-5 1-4 7-6 10-2 4 0 6 3 6 7z" fill="#1a80d8" stroke="#fff"/></symbol>
<symbol id="bd" viewBox="0 0 32 32"><rect x="3" y="1" width="26" height="30" rx="3" fill="#f4f8ff"/><path d="M9 7c7 1 6 6 9 9l9-4c-2 6-5 11-9 13-3-1-5-3-6-6l-4-8z" fill="#2b84f0"/></symbol>
<symbol id="bn" viewBox="0 0 32 32"><rect x="1" y="1" width="30" height="30" rx="6" fill="#fff"/><circle cx="16" cy="11" r="5" fill="none" stroke="#2b6de8" stroke-width="3"/><circle cx="10" cy="20" r="5" fill="none" stroke="#2b6de8" stroke-width="3"/><circle cx="22" cy="20" r="5" fill="none" stroke="#2b6de8" stroke-width="3"/><path d="M13 28h6v3h-6z" fill="#d33"/><path d="M19 28h6v3h-6z" fill="#2b6de8"/></symbol>
<symbol id="qq" viewBox="0 0 32 32"><path d="M16 1c5 0 8 4 8 10 2 4 3 8 1 12 0 4-4 7-9 7s-9-3-9-7c-2-4-1-8 1-12 0-6 3-10 8-10z" fill="#111"/><ellipse cx="16" cy="23" rx="7" ry="7" fill="#fff"/><path d="M6 16h20v4l-5 1v5h-4v-5H6z" fill="#e02020"/><ellipse cx="13" cy="8" rx="2" ry="3" fill="#fff"/><ellipse cx="19" cy="8" rx="2" ry="3" fill="#fff"/><path d="M12 12h8l-4 3z" fill="#f0a818"/><path d="M8 30h6v2H8zM18 30h6v2h-6z" fill="#f0a818"/></symbol>
<symbol id="st" viewBox="0 0 32 32"><ellipse cx="16" cy="16" rx="15" ry="16" fill="url(#gSt)"/><path d="M1 17l9 4c1-3 4-4 6-3l5-7c0-4 3-6 6-6 3 1 4 4 4 7 0 3-3 6-7 6l-6 5c0 3-3 5-6 4-2 0-4-2-4-4l-7-3z" fill="#fff"/><circle cx="25" cy="11" r="3" fill="#28527a"/></symbol>
<symbol id="sg" viewBox="0 0 24 24"><rect x="2" y="3" width="20" height="18" rx="3" transform="rotate(-12 12 12)" fill="#f04e1e"/><text x="12" y="18" text-anchor="middle" font-size="17" font-weight="700" font-family="Liberation Sans" fill="#fff">S</text></symbol>
<symbol id="ad" viewBox="0 0 24 24"><path d="M2 21L13 3h3L9 21z" fill="#1a8a9a"/><path d="M13 3h3l7 18h-6z" fill="#2a68c8"/><path d="M7 15h12l1 2H6z" fill="#3a9a30"/></symbol>
<symbol id="lg" viewBox="0 0 24 24"><path d="M15 3C8 2 2 6 2 12s5 9 10 9" fill="none" stroke="#0fa8e8" stroke-width="3.600"/><path d="M22 13h-9v4h5v6" fill="none" stroke="#0fa8e8" stroke-width="3.600"/></symbol>
<symbol id="nv" viewBox="0 0 24 24"><rect x="1" y="1" width="22" height="22" fill="#2a2f36"/><path d="M4 13c4-6 10-5 16-1-5 6-12 6-16 1z" fill="#76b900"/><circle cx="12" cy="12" r="3" fill="#2a2f36"/></symbol>
<symbol id="s360" viewBox="0 0 24 24"><circle cx="12" cy="12" r="10" fill="#f0e018"/><path d="M2 12a10 10 0 0 0 8 10" fill="none" stroke="#2a9a2a" stroke-width="3"/><path d="M12 6v12M6 12h12" stroke="#1a7a1a" stroke-width="3.400"/></symbol>
<symbol id="bat" viewBox="0 0 24 24"><rect x="5" y="8" width="16" height="10" fill="#fff"/><rect x="21" y="11" width="2" height="4" fill="#fff"/><path d="M1 9h4M3 4v5" stroke="#fff"/><rect x="1" y="2" width="4" height="4" fill="none" stroke="#fff"/></symbol>
<symbol id="net" viewBox="0 0 24 24"><rect x="5" y="5" width="18" height="13" fill="none" stroke="#fff" stroke-width="1.200"/><rect x="1" y="2" width="6" height="8" fill="#0c100a" stroke="#fff" stroke-width="1.200"/><path d="M14 18v3M9 22h10" stroke="#fff" stroke-width="1.200"/></symbol>
<symbol id="spk" viewBox="0 0 24 24"><path d="M2 9h4l6-5v16l-6-5H2z" fill="none" stroke="#fff"/><path d="M15 9c2 2 2 4 0 6M18 6c3 4 3 8 0 12M21 3c4 6 4 12 0 18" fill="none" stroke="#fff"/></symbol>
<symbol id="shd" viewBox="0 0 24 24"><path d="M12 1l10 3v8c0 6-5 10-10 12C7 22 2 18 2 12V4z" fill="#e8f6e0" stroke="#8abc6a"/><path d="M14 4l-6 10h4l-2 7 7-10h-4z" fill="#4ab82c"/></symbol>
<symbol id="msg" viewBox="0 0 24 24"><path d="M2 3h20v16H14l-2 3-2-3H2z" fill="none" stroke="#fff" stroke-width="1.300"/></symbol>
<symbol id="mtn" viewBox="0 0 24 24"><rect width="24" height="22" fill="#b8c0c8"/><path d="M0 22l10-14 6 6 8 8z" fill="#6a7a8a"/></symbol>
<symbol id="logo3d" viewBox="0 0 70 84"><path d="M35 0l35 20v44L35 84 0 64V20z" fill="#3ba6e2" fill-opacity=".48"/><path d="M35 22l19 11v22L35 66 16 55V33z" fill="#0d6a9e" fill-opacity=".75"/><path d="M35 30l13 7-13 8-13-8z" fill="#9bd8f7"/><path d="M35 45v17l13-8V37z" fill="#3aa0d8"/><path d="M35 45v17l-13-8V37z" fill="#6cc0ea"/></symbol>
</defs>
</svg>

<header class="titlebar">
  <div class="tb-top">
    <div class="qat">
      <svg class="i22"><use href="#nx"/></svg>
      <svg class="i18 m7"><use href="#save"/></svg><i class="qs m6"></i>
      <svg class="i18 m4"><use href="#undo"/></svg><i class="car light m6"></i>
      <svg class="i18 m6"><use href="#redo"/></svg><i class="qs m6"></i>
      <svg class="i18 m3"><use href="#cut"/></svg><svg class="i18 m7"><use href="#copy"/></svg><svg class="i18 m5"><use href="#paste"/></svg><i class="qs m5"></i>
      <svg class="i18 m6"><use href="#star"/></svg><i class="car light m4"></i><i class="qs m9"></i>
      <svg class="i18 m2"><use href="#brush"/></svg><i class="qs m6"></i>
      <svg class="i18 m4"><use href="#sw"/></svg><span class="qt">切换窗口</span>
      <svg class="i16 m8"><use href="#wn"/></svg><span class="qt">窗口</span><i class="car light m5"></i><i class="car light bar m6"></i>
    </div>
    <div class="apptitle">Mechatronics Concept Designer 12.0.0.27 - 建模</div>
    <div class="siemens">SIEMENS</div>
    <div class="winbtns">
      <span class="wb"><i class="wmin"></i></span>
      <span class="wb"><i class="wres"></i></span>
      <span class="wb close">✕</span>
    </div>
  </div>
  <div class="tb-bot">
    <nav class="tabs">
      <span class="tab file">文件<span class="lat12">(F)</span></span>
      <span class="tab act">主页</span>
      <span class="tab">装配</span><span class="tab">曲线</span><span class="tab">分析</span><span class="tab">视图</span><span class="tab">渲染</span><span class="tab">工具</span><span class="tab">应用模块</span><span class="tab">内部</span>
    </nav>
    <div class="searchwrap">
      <div class="searchbox"><span>查找命令</span><svg class="i16"><use href="#search"/></svg></div>
      <svg class="i16 hi"><use href="#focus"/></svg>
      <i class="upc"></i>
      <svg class="i16"><use href="#help"/></svg>
    </div>
  </div>
</header>

<section class="ribbon">
  <div class="g w-sk">
    <div class="gb">
      <div class="big bw34"><svg class="i32"><use href="#sk"/></svg><span>草图</span></div>
      <div class="gallery">
        <div class="gal-grid">
          <svg class="i24"><use href="#ga1"/></svg><svg class="i24"><use href="#ga2"/></svg><svg class="i24"><use href="#ga3"/></svg>
          <svg class="i24"><use href="#ga4"/></svg><svg class="i24"><use href="#ga5"/></svg><svg class="i24"><use href="#ga6"/></svg>
        </div>
        <div class="gal-sc"><span class="up"></span><span><i class="car"></i></span><span><i class="car bar"></i></span></div>
      </div>
    </div>
    <div class="ft"><i></i><span class="lf4">直接草图</span><i class="car"></i></div>
  </div>

  <div class="g w-fe">
    <div class="gb">
      <div class="big bw64"><svg class="i32"><use href="#plane"/></svg><span>基准平面</span><i class="car"></i></div>
      <div class="big bw40"><svg class="i32"><use href="#ext"/></svg><span>拉伸</span><i class="car"></i></div>
      <div class="big bw38"><svg class="i32"><use href="#hole"/></svg><span>孔</span></div>
      <div class="lst lw86">
        <div><svg class="i18"><use href="#arr"/></svg>阵列特征</div>
        <div><svg class="i18"><use href="#unite"/></svg>合并<i class="car small"></i></div>
        <div><svg class="i18"><use href="#shell"/></svg>抽壳</div>
      </div>
      <div class="big bw44"><svg class="i32"><use href="#blend"/></svg><span>边倒圆</span><i class="car"></i></div>
      <div class="lst lw78">
        <div><svg class="i18"><use href="#chamfer"/></svg>倒斜角</div>
        <div><svg class="i18"><use href="#trim"/></svg>修剪体</div>
        <div><svg class="i18"><use href="#draft"/></svg>拔模</div>
      </div>
      <div class="bigmore"><div class="mbox"><svg class="i20"><use href="#more1"/></svg></div><span>更多</span><i class="car"></i></div>
    </div>
    <div class="ft"><i></i><span class="lf7">特征</span><i class="car"></i></div>
  </div>

  <div class="g w-sy">
    <div class="gb">
      <div class="big bw62"><svg class="i32"><use href="#mvf"/></svg><span>移动面</span></div>
      <div class="lst lw84">
        <div><svg class="i18"><use href="#off"/></svg>偏置区域</div>
        <div><svg class="i18"><use href="#rep"/></svg>替换面</div>
        <div><svg class="i18"><use href="#del"/></svg>删除面</div>
      </div>
      <div class="bigmore"><div class="mbox"><svg class="i20"><use href="#more2"/></svg></div><span>更多</span><i class="car"></i></div>
    </div>
    <div class="ft"><i></i><span class="lf7">同步建模</span><i class="car"></i></div>
  </div>

  <div class="g w-st">
    <div class="gb ig pl4">
      <div class="ir"><b><svg><use href="#st1"/></svg></b><b><svg><use href="#st2"/></svg></b><b><svg><use href="#st3"/></svg></b><s></s><b><svg><use href="#st4"/></svg></b></div>
      <div class="ir"><b><svg><use href="#st5"/></svg></b><b><svg><use href="#st6"/></svg></b><b><svg><use href="#st7"/></svg></b><s></s><b><svg><use href="#st8"/></svg></b></div>
    </div>
    <div class="ft l"><span>标准化工<span class="lat">...</span></span><i class="car"></i></div>
  </div>

  <div class="g w-ge">
    <div class="gb ig pl3">
      <div class="ir"><b><svg><use href="#gr1"/></svg></b><b><svg><use href="#gr2"/></svg></b></div>
      <div class="ir"><b><svg><use href="#gr3"/></svg></b></div>
    </div>
    <div class="ft l"><span>齿<span class="lat">...</span></span><i class="car"></i></div>
  </div>

  <div class="g w-sp">
    <div class="gb ig pl4">
      <div class="ir"><b><svg><use href="#sp1"/></svg></b><b><svg><use href="#sp2"/></svg></b></div>
      <div class="ir"><b><svg><use href="#sp3"/></svg></b><s></s><b><svg><use href="#sp4"/></svg></b></div>
    </div>
    <div class="ft l"><span>弹<span class="lat">...</span></span><i class="car"></i></div>
  </div>

  <div class="g w-ad">
    <div class="gb ig pl3">
      <div class="ir"><b><svg><use href="#ad1"/></svg></b><b><svg><use href="#ad2"/></svg></b></div>
      <div class="ir"><b><svg><use href="#ad3"/></svg></b><b><svg><use href="#ad4"/></svg></b></div>
    </div>
    <div class="ft l"><span>加<span class="lat">...</span></span><i class="car"></i></div>
  </div>

  <div class="g w-mt">
    <div class="gb ig pl3">
      <div class="ir"><b><svg><use href="#mt1"/></svg></b><b><svg><use href="#mt2"/></svg></b><b><svg><use href="#mt3"/></svg></b><b><svg><use href="#mt4"/></svg></b></div>
      <div class="ir"><b><svg><use href="#mt5"/></svg></b><b><svg><use href="#mt6"/></svg></b><s></s><b><svg><use href="#mt7"/></svg></b></div>
    </div>
    <div class="ft l"><span class="pl6">建模工<span class="lat">...</span></span><i class="car"></i></div>
  </div>

  <div class="g w-do">
    <div class="gb ig pl4">
      <div class="ir"><b><svg><use href="#cube"/></svg></b></div>
      <div class="ir"><b><svg><use href="#cube"/></svg></b></div>
    </div>
    <div class="ft l"><span>.</span><i class="car"></i></div>
  </div>

  <div class="g w-si">
    <div class="gb ig pl3">
      <div class="ir"><b><svg><use href="#d1"/></svg></b><s></s><b><svg><use href="#tX"/></svg></b><b><svg><use href="#num"/></svg></b><b class="m1"><svg><use href="#numr"/></svg></b><b><svg><use href="#numg"/></svg></b><b><svg><use href="#numr"/></svg></b><b><svg><use href="#bxX"/></svg></b><b><svg><use href="#prX"/></svg></b><b><svg><use href="#h7"/></svg></b><b><svg><use href="#h7b"/></svg></b><b><svg><use href="#h7b"/></svg></b><b><svg><use href="#h10"/></svg></b></div>
      <div class="ir"><b><svg><use href="#r1"/></svg></b><b><svg><use href="#r2"/></svg></b><s class="mn"></s><b><svg><use href="#dia"/></svg></b><b><svg><use href="#dia"/></svg></b><b><svg><use href="#ret"/></svg></b></div>
    </div>
    <div class="ft"><i></i><span class="lf10">尺寸快速格式化工具<span class="lat"> - GC</span>工具箱</span><i class="car"></i></div>
  </div>

  <div class="g w-su">
    <div class="gb"><div class="big bw43"><svg class="i32"><use href="#mesh"/></svg><span>曲面</span><i class="car"></i></div></div>
    <div class="ft"></div>
  </div>

  <div class="g w-as">
    <div class="gb">
      <div class="big bw66 dis"><svg class="i30"><use href="#proc"/></svg><span>处理装配</span></div>
      <div class="big bw42"><svg class="i32"><use href="#addc"/></svg><span>添加</span><i class="car"></i></div>
      <div class="lst lw90">
        <div><svg class="i18"><use href="#ac"/></svg>装配约束</div>
        <div><svg class="i18"><use href="#mc"/></svg>移动组件</div>
        <div><svg class="i18"><use href="#pc"/></svg>阵列组件</div>
      </div>
    </div>
    <div class="ft"><i></i><span class="lf7">装配</span><i class="car"></i></div>
  </div>
  <div class="g-end"><i class="car"></i></div>
</section>

<section class="toolbar">
  <svg class="i18 tm"><use href="#menu"/></svg><span class="menu-l">菜单<span class="lat12">(M)</span></span><i class="car m3"></i>
  <i class="tsep m8"></i>
  <div class="combo c1"><span>无选择过滤器</span><i class="cbtn"><i class="car"></i></i></div>
  <div class="combo c2"><span>整个装配</span><i class="cbtn"><i class="car"></i></i></div>
  <b class="t m4"><svg><use href="#tb1"/></svg></b>
  <b class="t m3"><svg><use href="#tb2"/></svg></b>
  <b class="t mn2"><svg><use href="#tb3"/></svg></b><i class="car m1"></i>
  <b class="t m4"><svg><use href="#tb4"/></svg></b>
  <b class="t"><svg><use href="#tb5"/></svg></b>
  <b class="t m4"><svg><use href="#tb6"/></svg></b>
  <b class="t"><svg><use href="#tb7"/></svg></b><i class="car m1"></i>
  <b class="t m6"><svg><use href="#tb8"/></svg></b>
  <b class="t"><svg><use href="#tb9"/></svg></b>
  <b class="t bx m2"><svg><use href="#sn"/></svg></b>
  <b class="t bx m1"><svg><use href="#ln"/></svg></b>
  <b class="t bx m1"><svg><use href="#ln"/></svg></b>
  <b class="t"><svg><use href="#kk"/></svg></b>
  <b class="t bx m3"><svg><use href="#pk"/></svg></b>
  <b class="t bx"><svg><use href="#wv"/></svg></b>
  <b class="t m1"><svg><use href="#ax"/></svg></b>
  <b class="t bx m1"><svg><use href="#cc"/></svg></b>
  <b class="t m1"><svg><use href="#cp"/></svg></b>
  <b class="t bx m1"><svg><use href="#cr"/></svg></b>
  <b class="t bx m1"><svg><use href="#ln"/></svg></b>
  <b class="t"><svg><use href="#ft"/></svg></b>
  <b class="t m2"><svg><use href="#fg"/></svg></b>
  <b class="t"><svg><use href="#fm"/></svg></b>
  <i class="tsep m8"></i>
  <b class="t m10"><svg><use href="#v1"/></svg></b>
  <b class="t"><svg><use href="#v2"/></svg></b>
  <b class="t"><svg><use href="#v3"/></svg></b>
  <b class="t"><svg><use href="#v4"/></svg></b>
  <b class="t"><svg><use href="#v5"/></svg></b>
  <b class="t m2"><svg><use href="#v6"/></svg></b><i class="car m3"></i>
  <b class="t m3"><svg><use href="#v7"/></svg></b><i class="car m2"></i>
  <b class="t m4"><svg><use href="#v8"/></svg></b><i class="car m3"></i>
  <b class="t m3"><svg><use href="#v9"/></svg></b><i class="car m2"></i>
  <i class="tsep m11"></i>
  <i class="car tend"></i>
</section>

<main class="main">
  <aside class="rail">
    <span class="gear">⚙</span>
    <span class="rt mt20"><svg><use href="#t1"/></svg></span>
    <span class="rt mt2"><svg><use href="#t2"/></svg></span>
    <span class="rt active"><svg><use href="#t3"/></svg></span>
    <span class="rt mt1"><svg><use href="#t4"/></svg></span>
    <span class="rt mt14"><svg><use href="#t5"/></svg></span>
    <span class="rt mt14"><svg><use href="#t6"/></svg></span>
    <span class="rt mt14"><svg><use href="#t7"/></svg></span>
    <span class="rt mt1"><svg><use href="#t8"/></svg></span>
    <span class="rt mt2"><svg><use href="#t9"/></svg></span>
    <span class="rt mt2"><svg><use href="#t10"/></svg></span>
  </aside>

  <section class="panel">
    <div class="p-head"><span>部件导航器</span><i class="maxi"></i></div>
    <div class="tree">
      <div class="th"><span class="th1">名称<i class="sorta"></i></span><span class="th2">最新</span></div>
      <div class="tb">
        <div class="r r0 conn-d"><i class="ex plus"></i><svg class="ti16 a5"><use href="#mv"/></svg><span class="lb">模型视图</span></div>
        <div class="r r0 conn-u"><i class="ex plus"></i><svg class="ti14 a7"><use href="#ck"/></svg><svg class="ti15 a3"><use href="#cam"/></svg><span class="lb a3">摄像机</span></div>
        <div class="r r0 conn-u"><i class="ex minus"></i><svg class="ti16 a5"><use href="#fold"/></svg><span class="lb">模型历史记录</span></div>
        <div class="r r1"><svg class="ti13"><use href="#cb"/></svg><svg class="ti15 a2"><use href="#csys"/></svg><span class="lb">基准坐标系<span class="lat l4"> (0)</span></span><svg class="okc"><use href="#ck"/></svg></div>
        <div class="r r1 gr"><svg class="ti13"><use href="#cb"/></svg><svg class="ti15 a2"><use href="#skt"/></svg><span class="lb">草图<span class="lat"> (1) “SK...</span></span><svg class="okc"><use href="#ck"/></svg></div>
        <div class="r r1"><svg class="ti13"><use href="#cb"/></svg><svg class="ti15 a2"><use href="#exs"/></svg><span class="lb">拉伸<span class="lat"> (2)</span></span><svg class="okc"><use href="#ck"/></svg></div>
        <div class="r r1 gr"><svg class="ti13"><use href="#cb"/></svg><svg class="ti15 a2"><use href="#skt"/></svg><span class="lb">草图<span class="lat"> (3) “SK...</span></span><svg class="okc"><use href="#ck"/></svg></div>
        <div class="r r1"><svg class="ti13"><use href="#cb"/></svg><svg class="ti15 a2"><use href="#exs"/></svg><span class="lb">拉伸<span class="lat"> (4)</span></span><svg class="okc"><use href="#ck"/></svg></div>
        <div class="r r1 gr"><svg class="ti13"><use href="#cb"/></svg><svg class="ti15 a2"><use href="#skt"/></svg><span class="lb">草图<span class="lat"> (5) “SK...</span></span><svg class="okc"><use href="#ck"/></svg></div>
        <div class="r r1"><svg class="ti13"><use href="#cb"/></svg><svg class="ti15 a2"><use href="#exs"/></svg><span class="lb">拉伸<span class="lat"> (6)</span></span><svg class="okc"><use href="#ck"/></svg></div>
        <div class="r r1 gr"><svg class="ti13"><use href="#cb"/></svg><svg class="ti15 a2"><use href="#skt"/></svg><span class="lb">草图<span class="lat"> (7) “SK...</span></span><svg class="okc"><use href="#ck"/></svg></div>
        <div class="r r1"><svg class="ti13"><use href="#cb"/></svg><svg class="ti15 a2"><use href="#exs"/></svg><span class="lb">拉伸<span class="lat"> (8)</span></span><svg class="okc"><use href="#ck"/></svg></div>
        <div class="r r1 gr"><svg class="ti13"><use href="#cb"/></svg><svg class="ti15 a2"><use href="#skt"/></svg><span class="lb">草图<span class="lat"> (9) “SK...</span></span><svg class="okc"><use href="#ck"/></svg></div>
        <div class="r r1"><svg class="ti13"><use href="#cb"/></svg><svg class="ti15 a2"><use href="#exs"/></svg><span class="lb">拉伸<span class="lat"> (10)</span></span><svg class="okc"><use href="#ck"/></svg></div>
        <div class="r r1 gr"><svg class="ti13"><use href="#cb"/></svg><svg class="ti15 a2"><use href="#skt"/></svg><span class="lb">草图<span class="lat"> (11) “S...</span></span><svg class="okc"><use href="#ck"/></svg></div>
        <div class="r r1 last bd"><svg class="ti13"><use href="#cb"/></svg><svg class="ti15 a2"><use href="#exs"/></svg><span class="lb">拉伸<span class="lat"> (12)</span></span><svg class="okc"><use href="#ck"/></svg></div>
      </div>
      <div class="hsb"><i class="hl"></i><i class="hthumb"></i><i class="hr"></i></div>
    </div>
    <div class="sash"><i></i><b></b><i></i></div>
    <div class="acc"><span>相关性</span><em><svg><use href="#exp"/></svg></em></div>
    <div class="acc"><span>细节</span><em><svg><use href="#exp"/></svg></em></div>
    <div class="acc"><span>预览</span><em><svg><use href="#exp"/></svg></em></div>
  </section>

  <section class="canvas">
    <div class="doc-tabs"><div class="doc-tab"><svg class="i16"><use href="#part"/></svg><span>随堂练习<span class="lat">.prt</span></span><em>✖</em></div></div>
    <div class="view">
      <svg class="model" viewBox="0 0 1440 1568" preserveAspectRatio="none">
        <g stroke="#33312c" stroke-width="1" stroke-linejoin="round">
          <path vector-effect="non-scaling-stroke" d="M58 993L172 1056L400 1205L440 1226L430 1220L215 1078L172 1050Z" fill="#7a4e0c"/>
          <path vector-effect="non-scaling-stroke" d="M598 1272L713 1338L975 1506L1015 1522L975 1500L713 1330Z" fill="#7a4e0c"/>
          <path vector-effect="non-scaling-stroke" d="M565 407L695 490L575 692L700 770C750 810 768 870 765 940C762 1040 680 1150 600 1212C560 1238 470 1240 430 1220L215 1078L172 1050ZM600 858C650 860 672 910 668 960C660 1050 580 1120 515 1118C470 1115 445 1075 446 1030C450 950 530 858 600 858Z" fill="#c97900" fill-rule="evenodd"/>
          <path vector-effect="non-scaling-stroke" d="M575 860C580 875 582 895 582 920C580 1000 520 1060 460 1075C470 1105 490 1118 515 1118C580 1120 660 1050 668 960C672 910 650 860 600 858C590 858 582 859 575 860Z" fill="url(#gHole)"/>
          <path vector-effect="non-scaling-stroke" d="M565 407C620 300 740 212 850 212C910 212 960 235 995 275C900 280 780 370 695 490Z" fill="url(#gIn)"/>
          <path vector-effect="non-scaling-stroke" d="M1090 115L1205 185C1300 245 1355 360 1355 490C1355 590 1310 680 1260 775L1100 685L1120 400Z" fill="url(#gSide)"/>
          <path vector-effect="non-scaling-stroke" d="M1100 685L1260 775L1140 985L1255 1055C1310 1090 1332 1160 1332 1220C1332 1340 1200 1525 1065 1525C1030 1525 1000 1515 975 1500L713 1330L810 1165L770 1140L835 1030L880 1050ZM1085 1178C1100 1165 1120 1150 1170 1150C1210 1150 1238 1195 1235 1250C1230 1340 1160 1410 1090 1410C1065 1410 1040 1395 1025 1365C1015 1345 1012 1320 1015 1295L975 1262C985 1220 1010 1175 1040 1155Z" fill="#c97900" fill-rule="evenodd"/>
          <path vector-effect="non-scaling-stroke" d="M1145 1150C1148 1165 1150 1180 1150 1200C1145 1280 1080 1350 1025 1365C1040 1395 1065 1410 1090 1410C1160 1410 1230 1340 1235 1250C1238 1195 1210 1150 1170 1150Z" fill="url(#gHole)"/>
          <path vector-effect="non-scaling-stroke" d="M58 993L158 830L203 852L270 740L230 715L400 420C500 240 700 50 900 50C980 50 1040 75 1090 115C1150 165 1192 260 1195 370C1190 480 1150 600 1100 685L880 1050L835 1030L770 1140L810 1165L713 1330L598 1272L750 1020L1000 600C1050 500 1060 400 1030 330C1000 260 930 212 850 212C740 212 620 300 565 407L172 1050Z" fill="#ffa408"/>
          <path vector-effect="non-scaling-stroke" fill="none" d="M600 435C650 320 760 240 880 238C920 238 950 245 975 262M565 407L695 490M600 435L215 1080M810 1165L975 1262M835 1030L1085 1178"/>
        </g>
        <g>
          <path vector-effect="non-scaling-stroke" d="M1100 695L1250 790M990 865L1060 900L1158 745" fill="none" stroke="#d8d8d8" stroke-width="1.500"/>
          <path vector-effect="non-scaling-stroke" d="M1040 660L1265 785M1040 668L845 990M1160 735L1065 890L940 830" fill="none" stroke="#0000ff" stroke-width="1.200"/>
          <path vector-effect="non-scaling-stroke" d="M1020 660H1060M1040 640V680" stroke="#0000ff" stroke-width="2"/>
          <path d="M838 988L848 950L870 962ZM1288 785L1250 762L1258 800Z" fill="#0000ff"/>
          <path vector-effect="non-scaling-stroke" d="M1040 665L1268 798M1040 665L1275 780" stroke="#0000ff" stroke-width="1.200"/>
          <text x="815" y="1022" class="ax-l">Y</text><text x="1292" y="808" class="ax-l">X</text><text x="1276" y="830" class="ax-l">Z</text>
        </g>
      </svg>
      <svg class="mini" viewBox="0 0 100 70">
        <path d="M40 22L65 40L55 62L25 45Z" fill="#d6d6d6" stroke="#b0b0b0"/><path d="M53 30L43 52" stroke="#b0b0b0"/>
        <path d="M38 23L20 52L24 54L41 26Z" fill="#2c9a3c"/><path d="M17 60L20 48L27 52Z" fill="#2c9a3c"/>
        <path d="M41 19L62 33L60 36L40 24Z" fill="#c8282c"/><path d="M68 36L58 29L56 37Z" fill="#c8282c"/>
        <circle cx="40" cy="21" r="4" fill="#e8e8e8" stroke="#aaa"/>
        <path d="M65 32L74 41M74 32L65 41" stroke="#d82828"/><path d="M67 43H74" stroke="#2a4ad0" stroke-width="1.400"/>
        <path d="M12 60L15 65L19 60M15 65V70" stroke="#2c9a3c" fill="none"/>
      </svg>
      <div class="badge"><span>47</span></div>
    </div>
  </section>
</main>

<footer class="status"><span class="st-a"></span><span class="st-b"><svg class="i20"><use href="#mtn"/></svg><svg class="i16 sb"><use href="#focus"/></svg></span><span class="st-c"></span></footer>

<footer class="taskbar">
  <div class="slots">
    <span class="sl"><svg class="i32"><use href="#win"/></svg></span>
    <span class="sl tvs"><svg class="i32"><use href="#tv"/></svg></span>
    <span class="sl run"><svg class="i32"><use href="#qb"/></svg></span>
    <span class="sl"><svg class="i32"><use href="#sw2"/></svg></span>
    <span class="sl"><svg class="i32"><use href="#rs"/></svg></span>
    <span class="sl"><svg class="i32"><use href="#ne"/></svg></span>
    <span class="sl"><svg class="i32"><use href="#wd"/></svg></span>
    <span class="sl"><svg class="i32"><use href="#xl"/></svg></span>
    <span class="sl"><svg class="i32"><use href="#on"/></svg></span>
    <span class="sl"><svg class="i32"><use href="#pp"/></svg></span>
    <span class="sl"><svg class="i32"><use href="#fo"/></svg></span>
    <span class="sl"><svg class="i32"><use href="#bd"/></svg></span>
    <span class="sl"><svg class="i32"><use href="#bn"/></svg></span>
    <span class="sl"><svg class="i32"><use href="#nx"/></svg></span>
    <span class="sl"><svg class="i32"><use href="#qq"/></svg></span>
    <span class="sl"><svg class="i32"><use href="#st"/></svg></span>
    <span class="sl cur"><svg class="i32"><use href="#nx"/></svg></span>
  </div>
  <div class="tray">
    <span class="ty"><svg><use href="#sg"/></svg></span>
    <span class="ty m5"><svg><use href="#qq"/></svg></span>
    <span class="ty m1"><svg><use href="#ad"/></svg></span>
    <span class="ty"><svg><use href="#ne"/></svg></span>
    <span class="ty"><svg><use href="#lg"/></svg></span>
    <span class="ty"><svg><use href="#nv"/></svg></span>
    <span class="ty"><svg><use href="#s360"/></svg></span>
    <span class="ty"><svg><use href="#bat"/></svg></span>
    <span class="ty"><svg><use href="#net"/></svg></span>
    <span class="ty"><svg><use href="#spk"/></svg></span>
    <span class="ty"><svg><use href="#shd"/></svg></span>
    <div class="clock"><span>14:03</span><span>2018/6/24/周日</span></div>
    <span class="ty msg"><svg><use href="#msg"/></svg></span>
  </div>
</footer>

<div class="wm">
  <svg class="wm-logo"><use href="#logo3d"/></svg>
  <div class="wm-t"><span class="wm-b">3D世界网</span><span class="wm-s">WWW.3DSJW.COM</span></div>
</div>
</body>
</html>
```

FILE: styles.css
```css
*{box-sizing:border-box}
html,body{margin:0;padding:0}
body{width:1920px;height:1080px;overflow:hidden;position:relative;font-family:"Noto Sans CJK SC","Noto Sans",sans-serif;font-size:15px;color:#222;background:#ddd}
.defs{position:absolute;width:0;height:0}
svg{display:block;flex:none}
i,b,s,em{font-style:normal;font-weight:normal;text-decoration:none}
.i16{width:16px;height:16px}.i18{width:18px;height:18px}.i20{width:20px;height:20px}.i22{width:22px;height:22px}.i24{width:24px;height:24px}.i30{width:30px;height:30px}.i32{width:32px;height:32px}
.lat12{font-family:"Liberation Mono",monospace;font-size:12.500px}
.car{display:inline-block;flex:none;width:0;height:0;border-left:4px solid transparent;border-right:4px solid transparent;border-top:5px solid #333}
.car.light{border-top-color:#aaa}
.car.bar{position:relative;margin-top:3px}
.car.bar::before{content:"";position:absolute;left:-4px;top:-8px;width:8px;height:2px;background:#333}
.car.light.bar::before{background:#aaa}
.car.small{margin-left:9px;border-left-width:3px;border-right-width:3px;border-top-width:4px}
.m1{margin-left:1px}.m2{margin-left:2px}.m3{margin-left:3px}.m4{margin-left:4px}.m5{margin-left:5px}.m6{margin-left:6px}.m7{margin-left:7px}.m8{margin-left:8px}.m9{margin-left:9px}.m10{margin-left:10px}.m11{margin-left:11px}.mn2{margin-left:-2px}

/* title bar */
.titlebar{height:55px;border-top:3px solid #5a5a5a;background:radial-gradient(ellipse 180px 26px at 1800px 52px,#7c7c7c,transparent),#1a1a1a;color:#fff;display:flex;flex-direction:column}
.tb-top{height:25px;display:flex;align-items:center}
.qat{width:920px;display:flex;align-items:center;padding-left:2px;color:#bdbdbd}
.qs{width:1px;height:20px;background:#4e4e4e;flex:none}
.qt{font-size:14.500px;margin-left:5px;white-space:nowrap}
.apptitle{font-family:"Open Sans","Noto Sans CJK SC",sans-serif;font-size:15.600px;color:#eee;white-space:nowrap;margin-top:-3px}
.siemens{margin-left:auto;font-family:"Liberation Sans",sans-serif;font-weight:700;font-size:15.500px;margin-right:24px;margin-top:2px}
.winbtns{display:flex;gap:4px;margin-right:3px}
.wb{width:25px;height:21px;border:1px solid #666;border-radius:3px;background:linear-gradient(#6a6a6a,#2e2e2e);display:flex;align-items:center;justify-content:center;color:#fff;font-size:13px}
.wb.close{background:linear-gradient(#ec6a4c,#c83a1c);border-color:#b85a48}
.wmin{width:8px;height:3px;background:#fff;margin-top:7px}
.wres{width:9px;height:8px;border:1px solid #fff;border-top-width:2px;box-shadow:2px -2px 0 -1px #fff}
.tb-bot{height:27px;display:flex;justify-content:space-between;align-items:flex-end}
.tabs{display:flex;height:25px;align-items:stretch}
.tab{padding:0 13px;color:#fff;line-height:23px;white-space:nowrap;text-align:center}
.tab.file{width:94px;padding:0;margin-right:2px;background:linear-gradient(#1f5fa8,#1b4f8e 55%,#2c6fba);border-radius:3px 3px 0 0}
.tab.act{width:56px;padding:0;background:linear-gradient(#fff,#e4e4e4);color:#111;border-radius:3px 3px 0 0}
.searchwrap{display:flex;align-items:center;height:27px;padding-right:9px;padding-bottom:4px}
.searchbox{width:137px;height:21px;border:1px solid #777;background:#2e2e2e;display:flex;align-items:center;justify-content:space-between;padding:0 2px 0 3px;color:#9a9a9a;font-size:14.500px}
.hi{margin-left:10px}
.upc{width:9px;height:9px;border-left:3px solid #fff;border-top:3px solid #fff;transform:rotate(45deg);margin:4px 13px 0 14px}

/* ribbon */
.ribbon{height:92px;display:flex;background:linear-gradient(#ececec,#d8d8d8 55%,#c8c8c8);border-bottom:1px solid #9a9a9a;box-shadow:inset 0 -2px 0 #d8d8d8}
.g{display:flex;flex-direction:column;border-right:1px solid #eee;flex:none;height:88px;margin-top:2px}
.w-sk{width:182px}.w-fe{width:425px}.w-sy{width:200px}.w-st{width:104px}.w-ge{width:52px}.w-sp{width:58px}.w-ad{width:52px}.w-mt{width:97px}.w-do{width:30px}.w-si{width:288px}.w-su{width:43px}.w-as{width:213px}
.g-end{flex:1;display:flex;align-items:flex-end;justify-content:flex-end;padding:0 7px 24px 0}
.gb{height:70px;display:flex;flex:none}
.ft{height:18px;display:grid;grid-template-columns:1fr auto 1fr;align-items:center;padding:0 10px 0 2px;color:#555;line-height:18px;white-space:nowrap}
.ft .car{justify-self:end}
.ft.l{display:flex;justify-content:space-between;padding:0 9px 0 1px}
.lf4{margin-right:4px}.lf7{margin-right:7px}.lf10{margin-right:10px}
.pl6{padding-left:5px}
.big{display:flex;flex-direction:column;align-items:center;padding-top:4px;flex:none;line-height:22px;white-space:nowrap}
.big svg{margin-bottom:-1px;height:32px}
.big span{height:22px}
.big .car{margin-top:6px}
.bw34{width:34px;margin:0 11px 0 12px}
.bw64{width:64px;margin-left:10px}.bw40{width:40px;margin-left:1px}.bw38{width:38px;margin-left:2px}.bw44{width:44px;margin-left:-6px}.bw62{width:62px;margin-left:3px}.bw43{width:42px}.bw66{width:66px;margin-left:8px}.bw42{width:42px;margin-left:2px}
.dis{color:#aaa}
.gallery{width:119px;height:65px;display:flex;background:#e2e2e2;border:1px solid #cfcfcf;border-radius:3px;margin-top:4px}
.gal-grid{width:99px;display:grid;grid-template-columns:repeat(3,33px);grid-template-rows:33px 33px;justify-items:center;align-items:center}
.gal-grid svg{width:24px;height:24px}
.gal-sc{width:19px;display:grid;grid-template-rows:repeat(3,1fr);border-left:1px solid #bbb}
.gal-sc span{display:flex;align-items:center;justify-content:center;border-bottom:1px solid #bbb}
.gal-sc .up::before{content:"";border-left:4px solid transparent;border-right:4px solid transparent;border-bottom:5px solid #bbb}
.lst{display:flex;flex-direction:column;flex:none;line-height:22px;white-space:nowrap;margin-top:-1px}
.lst div{display:flex;align-items:center;height:22px;gap:3px}
.lw86{width:104px;padding-left:7px}.lw78{width:85px;padding-left:9px}.lw84{width:95px;padding-left:3px;margin-left:-3px}.lw90{width:90px;padding-left:4px}
.bigmore{width:39px;display:flex;flex-direction:column;align-items:center;flex:none;margin-top:3px;line-height:22px}
.mbox{width:38px;height:36px;border:1px solid #bcbcbc;border-radius:3px;background:#dedede;display:flex;align-items:center;justify-content:center}
.bigmore span{height:22px;margin-top:-2px}
.bigmore .car{margin-top:6px}
.ig{flex-direction:column;gap:10px;padding-top:10px}
.pl3{padding-left:3px}.pl4{padding-left:4px}
.ir{display:flex;height:20px;align-items:center}
.ir b{width:23px;height:20px;display:flex;justify-content:center;flex:none}
.ir b svg{width:20px;height:20px}
.ir b.m1{margin-left:1px}
.ir s{width:5px;height:28px;flex:none;display:flex;justify-content:center}
.ir s::before{content:"";width:1px;height:28px;background:#eee}

/* toolbar */
.toolbar{height:30px;display:flex;align-items:center;background:linear-gradient(#d6d6d6,#e6e6e6 20%,#d0d0d0);border-bottom:1px solid #bbb}
.tm{margin-left:9px}
.menu-l{margin-left:3px;width:54px;white-space:nowrap}
.tsep{width:1px;height:24px;background:#f2f2f2;flex:none}
.combo{height:20px;background:#fff;border:1px solid #8a8a8a;border-radius:3px;display:flex;justify-content:space-between;overflow:hidden;line-height:18px;flex:none;padding-left:2px}
.c1{width:146px;margin-left:11px}.c2{width:155px;margin-left:12px}
.cbtn{width:19px;background:linear-gradient(#e8f2ff,#7db0e8);border-left:1px solid #7a9cc8;display:flex;align-items:center;justify-content:center}
.t{width:24px;height:24px;display:flex;align-items:center;justify-content:center;flex:none}
.t svg{width:19px;height:19px}
.t.bx{background:#fff;border:1px solid #8a8a8a;border-radius:3px;height:26px}
.tend{margin-left:auto;margin-right:7px}

/* main */
.main{height:830px;display:flex}
.rail{width:31px;flex:none;background:linear-gradient(90deg,#a8a8a8,#c2c2c2);display:flex;flex-direction:column;align-items:flex-end;padding-top:4px;border-right:1px solid #fff}
.gear{height:22px;width:30px;text-align:center;font-size:18px;line-height:22px;color:#222;font-family:"DejaVu Sans",sans-serif}
.rt{width:26px;height:40px;background:linear-gradient(#f0f0f0,#d4d4d4);border:1px solid #777;border-right:none;border-radius:5px 0 0 5px;display:flex;align-items:center;justify-content:center;flex:none}
.rt svg{width:22px;height:22px}
.rt.active{width:29px;height:44px;background:#ececec;border-color:#888}
.mt1{margin-top:1px}.mt2{margin-top:2px}.mt14{margin-top:14px}.mt20{margin-top:20px}

.panel{width:304px;flex:none;background:#ececec;border-right:1px solid #aaa;border-bottom:1px solid #aaa;padding-left:7px;display:flex;flex-direction:column}
.p-head{height:38px;display:flex;align-items:center;justify-content:space-between;padding:2px 15px 0 6px;font-size:15.700px;font-weight:700;color:#111}
.maxi{width:15px;height:15px;border:1px solid #111;border-top-width:3px}
.tree{width:287px;height:697px;border:1px solid #6a6a6a;background:#f4f4f4;display:flex;flex-direction:column}
.th{height:19px;display:flex;background:linear-gradient(#f8f8f8,#e8e8e8 50%,#dcdcdc);border-bottom:1px solid #aaa;font-size:14.500px;line-height:19px;flex:none}
.th1{width:200px;padding-left:8px;border-right:1px solid #bbb;display:flex;align-items:center}
.th2{padding-left:6px}
.sorta{border-left:5px solid transparent;border-right:5px solid transparent;border-bottom:5px solid #222;margin-left:16px;margin-top:-3px}
.tb{height:655px;overflow:hidden;background:linear-gradient(#e6e6e6,#e6e6e6) 200px 0/1px 100% no-repeat,repeating-linear-gradient(#fff 0 19px,#e8e8e8 19px 20px,#f5f5f5 20px 39px,#e8e8e8 39px 40px);flex:none}
.r{height:20px;display:flex;align-items:center;position:relative;font-size:14.700px;line-height:20px;color:#333;white-space:nowrap}
.r0{padding-left:5px}
.r1{padding-left:41px}
.r1::before{content:"";position:absolute;left:29px;top:10px;width:11px;border-top:1px dotted #777}
.r1::after{content:"";position:absolute;left:29px;top:-1px;height:21px;border-left:1px dotted #777}
.r1.last::after{height:11px}
.conn-d::before,.conn-u::before{content:"";position:absolute;left:9px;border-left:1px dotted #777}
.conn-u::before{top:0;height:5px}
.conn-d::before{bottom:0;height:5px}
.ex{width:9px;height:9px;border:1px solid #888;background:linear-gradient(#fff,#ddd);position:relative;flex:none}
.ex::before{content:"";position:absolute;left:1px;top:3px;width:5px;height:1px;background:#333}
.ex.plus::after{content:"";position:absolute;left:3px;top:1px;width:1px;height:5px;background:#333}
.ti16{width:16px;height:16px}.ti15{width:15px;height:15px}.ti14{width:14px;height:14px}.ti13{width:13px;height:13px}
.a5{margin-left:5px}.a7{margin-left:7px}.a2{margin-left:2px}
.lb{margin-left:5px}
.a3,.lb.a3{margin-left:3px}
.r1 .lb{margin-left:4px}
.lat{font-family:"Liberation Mono",monospace;font-size:12.300px;white-space:pre}
.l4{margin-left:4px}
.gr{color:#a0a0a0}
.bd .lb{font-weight:700}.bd .lat{font-weight:700;margin-left:5px;font-size:13px}
.okc{position:absolute;left:206px;top:2px;width:16px;height:16px}
.hsb{flex:1;display:flex;align-items:center;background:#f3f3f3;padding:0 3px}
.hl,.hr{width:8px;height:8px;border-left:2px solid #555;border-bottom:2px solid #555;transform:rotate(45deg);margin-left:5px;flex:none}
.hr{transform:rotate(225deg);margin-left:auto;margin-right:5px}
.hthumb{width:170px;height:19px;background:#cbcbcb;margin-left:7px;flex:none}
.sash{height:12px;display:flex;align-items:center;gap:4px;width:287px;flex:none}
.sash i{flex:1;height:2px;background:#fff;border-top:1px solid #bbb}
.sash b{width:51px;height:6px;border:1px solid #aaa;background:#dcdcdc}
.acc{width:286px;height:25px;margin-left:1px;margin-bottom:1px;display:flex;justify-content:space-between;background:linear-gradient(#f8f8f8,#f2f2f2 55%,#d4d4d4 56%,#d8d8d8);border-bottom:1px solid #999;font-size:14.500px;font-weight:700;line-height:22px;padding-left:7px;color:#222;flex:none}
.acc em{width:26px;border-left:1px solid #999;display:flex;align-items:center;justify-content:center;box-shadow:inset 1px 0 #fff}
.acc em svg{width:14px;height:14px}

.canvas{flex:1;display:flex;flex-direction:column;min-width:0}
.doc-tabs{height:21px;background:#e9e9e9;flex:none;display:flex}
.doc-tab{width:141px;background:#595959;color:#fff;display:flex;align-items:center;padding-left:6px;font-size:14px;line-height:18px;white-space:nowrap}
.doc-tab span{margin-left:4px}
.doc-tab em{margin-left:5px;font-size:11px;font-family:"DejaVu Sans",sans-serif}
.view{flex:1;position:relative;overflow:hidden;background:linear-gradient(#b3b4b6 0,#e6e7e9 85%)}
.model{position:absolute;left:405px;top:152px;width:480px;height:540px}
.ax-l{fill:#0000ff;font:36px "Liberation Sans",sans-serif}
.mini{position:absolute;left:25px;top:722px;width:100px;height:70px}
.badge{position:absolute;right:-22px;top:293px;width:42px;height:42px;border-radius:50%;background:radial-gradient(circle at 50% 20%,#7be08e,#3dbf58 55%);border:3px solid #e8e8e8;outline:1px solid #9a9a9a;box-shadow:0 2px 5px rgba(0,0,0,.35);color:#fff;font:700 12px/36px "DejaVu Sans Mono",monospace;padding-left:3px}

/* status */
.status{height:23px;display:flex;background:linear-gradient(#f0f0f0,#d8d8d8);border-top:1px solid #a8a8a8;border-bottom:1px solid #777}
.st-a{width:902px;border-right:1px solid #f6f6f6}
.st-b{flex:1;display:flex;justify-content:flex-end;align-items:center;padding-right:42px}
.sb{margin-left:2px}
.st-c{width:18px;border-left:1px solid #f6f6f6}

/* taskbar */
.taskbar{height:50px;background:#0c110a;display:flex;justify-content:space-between;color:#fff}
.slots{display:flex;margin-left:-1px}
.sl{width:62px;height:50px;display:flex;align-items:center;justify-content:center;position:relative}
.tvs svg{margin-left:-4px}
.sl.run::after,.sl.cur::after{content:"";position:absolute;left:6px;right:5px;bottom:0;height:3px;background:#76b9ed}
.sl.cur{background:#4a4e46}
.sl.cur::after{left:0;right:0}
.tray{display:flex;align-items:center;padding-right:26px}
.ty{width:30px;height:30px;display:flex;align-items:center;justify-content:center}
.ty svg{width:22px;height:22px}
.clock{width:130px;display:flex;flex-direction:column;align-items:center;font-size:15.500px;line-height:22px;color:#fff;margin-top:-2px}
.msg{margin-left:10px}

/* watermark */
.wm{position:absolute;left:1637px;top:985px;display:flex;gap:9px;pointer-events:none}
.wm-logo{width:71px;height:84px}
.wm-t{display:flex;flex-direction:column;align-items:flex-start;width:180px}
.wm-b{font:700 41.500px/54px "Liberation Sans","Noto Sans CJK SC",sans-serif;color:rgba(255,255,255,.55);white-space:nowrap;margin-top:2px}
.wm-s{font:700 14px/18px "Liberation Sans",sans-serif;letter-spacing:4px;color:rgba(170,170,170,.75);white-space:nowrap}
```
